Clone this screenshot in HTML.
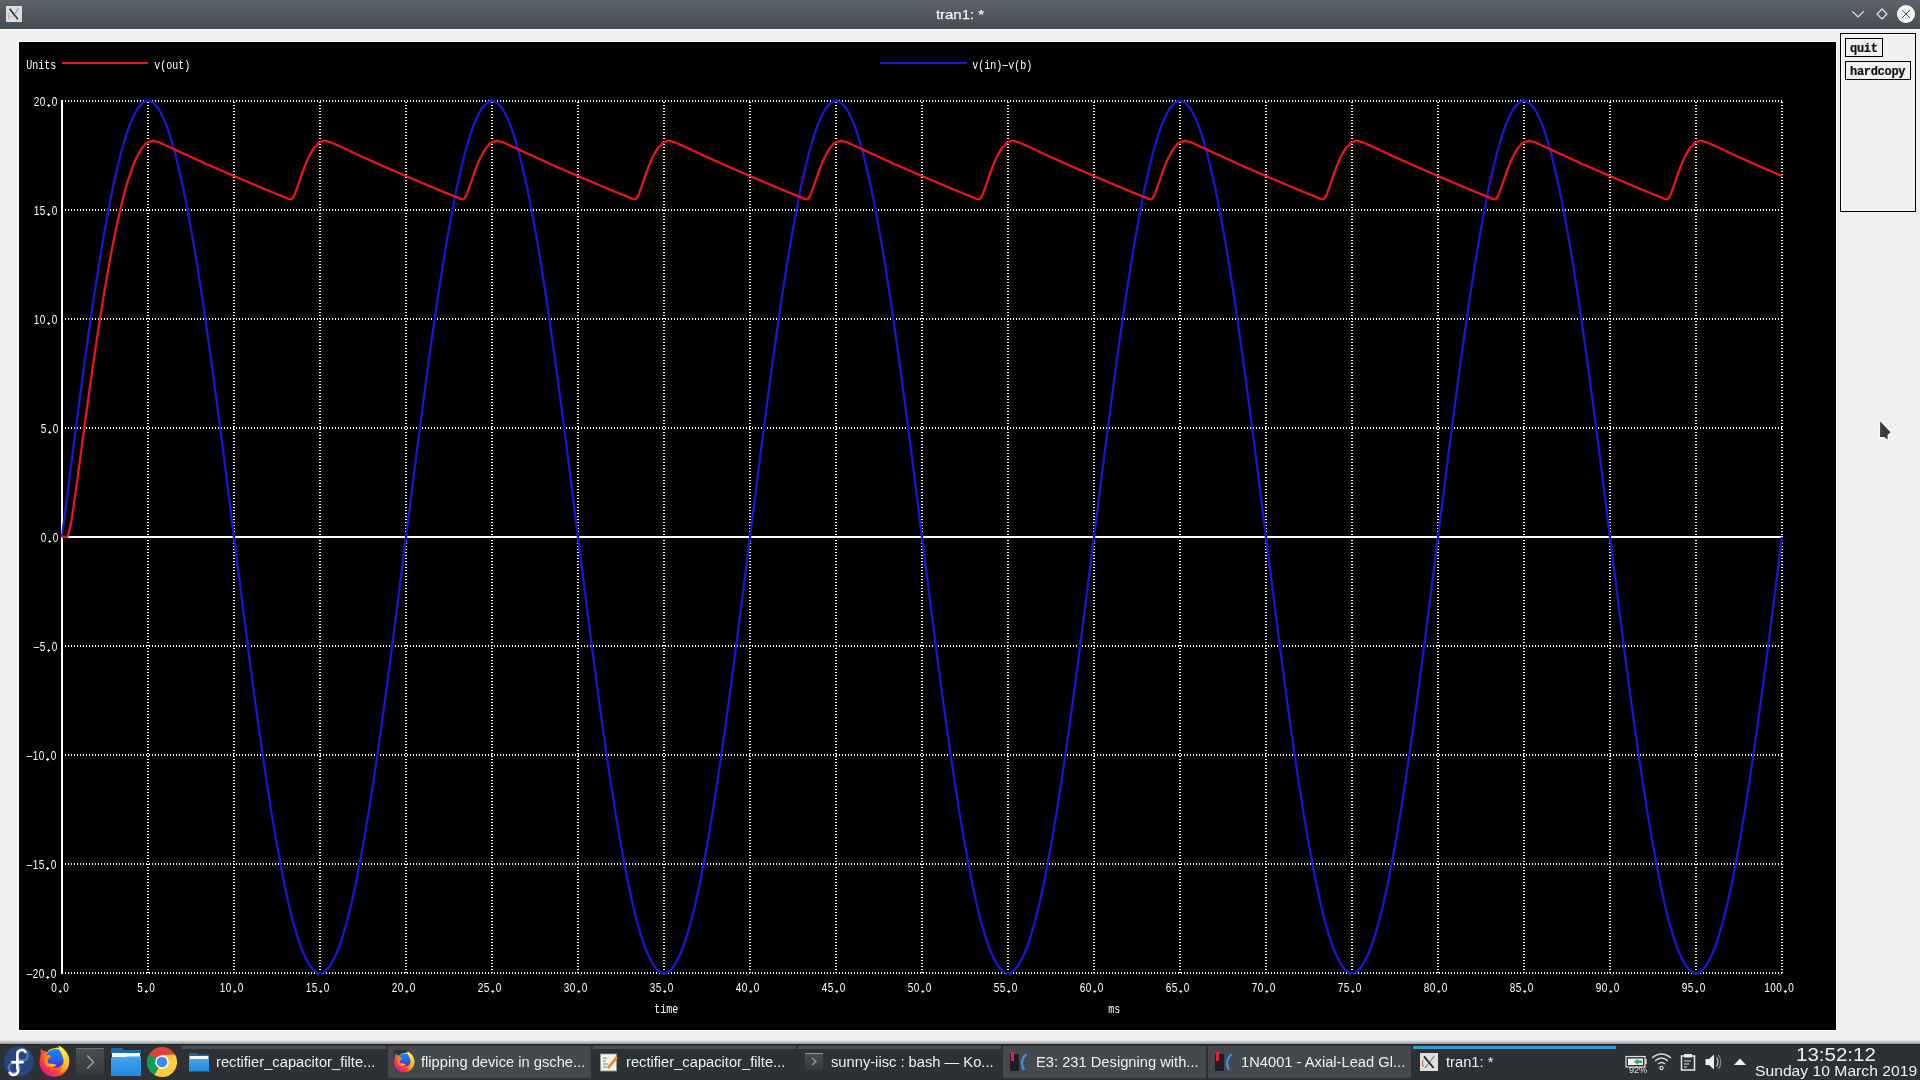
<!DOCTYPE html>
<html><head><meta charset="utf-8"><title>tran1</title>
<style>
html,body{margin:0;padding:0;width:1920px;height:1080px;overflow:hidden;background:#eff0f1;position:relative;font-family:"Liberation Sans",sans-serif}
.abs{position:absolute;transform:translateZ(0)}
#titlebar{left:0;top:0;width:1920px;height:29px;background:linear-gradient(#5c636b,#474c53)}
#title{left:0;top:6.6px;width:1920px;text-align:center;color:#eff0f1;font-size:13px;line-height:16px;transform:translateZ(0) scaleX(1.15);-webkit-text-stroke:0.25px #eff0f1}
#plot{left:18px;top:41px;width:1817px;height:988px;background:#000;border:1px solid #fff}
#chart{position:absolute;left:0;top:0;transform:translateZ(0)}
#panel{left:1840px;top:33px;width:74px;height:177px;border:1px solid #000;box-shadow:inset 1px 1px 0 #fff}
.btn{border:1px solid #000;font-family:"Liberation Mono",monospace;font-weight:bold;font-size:12px;color:#111;line-height:21px;box-sizing:border-box;-webkit-text-stroke:0.2px #111;letter-spacing:-0.3px;overflow:hidden}
#taskbar{left:0;top:1043px;width:1920px;height:37px;background:#2f3337}
.task{top:1046px;height:32px;color:#eff0f1;font-size:14px;line-height:32px;white-space:nowrap;transform-origin:0 0;transform:translateZ(0) scaleX(1.05)}
</style></head><body>
<div id="titlebar" class="abs"></div>
<div id="title" class="abs">tran1: *</div>
<div class="abs" style="left:0;top:29px;width:1920px;height:1px;background:#fcfcfc"></div>
<div id="plot" class="abs"></div>
<svg id="chart" width="1920" height="1080" viewBox="0 0 1920 1080">
<g stroke="#fff" stroke-width="2" stroke-dasharray="1 2" shape-rendering="crispEdges"><line x1="62" y1="101" x2="1783" y2="101"/><line x1="62" y1="210" x2="1783" y2="210"/><line x1="62" y1="319" x2="1783" y2="319"/><line x1="62" y1="428" x2="1783" y2="428"/><line x1="62" y1="646" x2="1783" y2="646"/><line x1="62" y1="755" x2="1783" y2="755"/><line x1="62" y1="864" x2="1783" y2="864"/><line x1="62" y1="973" x2="1783" y2="973"/><line x1="148" y1="102" x2="148" y2="974"/><line x1="234" y1="102" x2="234" y2="974"/><line x1="320" y1="102" x2="320" y2="974"/><line x1="406" y1="102" x2="406" y2="974"/><line x1="492" y1="102" x2="492" y2="974"/><line x1="578" y1="102" x2="578" y2="974"/><line x1="664" y1="102" x2="664" y2="974"/><line x1="750" y1="102" x2="750" y2="974"/><line x1="836" y1="102" x2="836" y2="974"/><line x1="922" y1="102" x2="922" y2="974"/><line x1="1008" y1="102" x2="1008" y2="974"/><line x1="1094" y1="102" x2="1094" y2="974"/><line x1="1180" y1="102" x2="1180" y2="974"/><line x1="1266" y1="102" x2="1266" y2="974"/><line x1="1352" y1="102" x2="1352" y2="974"/><line x1="1438" y1="102" x2="1438" y2="974"/><line x1="1524" y1="102" x2="1524" y2="974"/><line x1="1610" y1="102" x2="1610" y2="974"/><line x1="1696" y1="102" x2="1696" y2="974"/><line x1="1782" y1="102" x2="1782" y2="974"/></g>
<g stroke="#fff" stroke-width="2" shape-rendering="crispEdges"><line x1="62" y1="100" x2="62" y2="974"/><line x1="62" y1="537" x2="1783" y2="537"/></g>
<polyline fill="none" stroke="#1a16d2" stroke-width="2.3" stroke-linejoin="round" points="62.0,537.0 62.9,530.2 63.7,523.3 64.6,516.5 65.4,509.6 66.3,502.8 67.2,496.0 68.0,489.2 68.9,482.4 69.7,475.6 70.6,468.8 71.5,462.0 72.3,455.3 73.2,448.6 74.0,441.9 74.9,435.2 75.8,428.6 76.6,422.0 77.5,415.4 78.3,408.8 79.2,402.3 80.1,395.8 80.9,389.3 81.8,382.9 82.6,376.5 83.5,370.2 84.4,363.8 85.2,357.6 86.1,351.4 86.9,345.2 87.8,339.1 88.7,333.0 89.5,327.0 90.4,321.0 91.2,315.1 92.1,309.2 93.0,303.4 93.8,297.6 94.7,291.9 95.5,286.3 96.4,280.7 97.3,275.2 98.1,269.8 99.0,264.4 99.8,259.1 100.7,253.8 101.6,248.7 102.4,243.6 103.3,238.5 104.1,233.6 105.0,228.7 105.9,223.9 106.7,219.2 107.6,214.5 108.4,210.0 109.3,205.5 110.2,201.1 111.0,196.7 111.9,192.5 112.7,188.3 113.6,184.3 114.5,180.3 115.3,176.4 116.2,172.6 117.0,168.9 117.9,165.2 118.8,161.7 119.6,158.3 120.5,154.9 121.3,151.7 122.2,148.5 123.1,145.5 123.9,142.5 124.8,139.6 125.6,136.9 126.5,134.2 127.4,131.6 128.2,129.1 129.1,126.8 129.9,124.5 130.8,122.3 131.7,120.3 132.5,118.3 133.4,116.5 134.2,114.7 135.1,113.0 136.0,111.5 136.8,110.1 137.7,108.7 138.5,107.5 139.4,106.4 140.3,105.3 141.1,104.4 142.0,103.6 142.8,102.9 143.7,102.3 144.6,101.9 145.4,101.5 146.3,101.2 147.1,101.1 148.0,101.0 148.9,101.1 149.7,101.2 150.6,101.5 151.4,101.9 152.3,102.3 153.2,102.9 154.0,103.6 154.9,104.4 155.7,105.3 156.6,106.4 157.5,107.5 158.3,108.7 159.2,110.1 160.0,111.5 160.9,113.0 161.8,114.7 162.6,116.5 163.5,118.3 164.3,120.3 165.2,122.3 166.1,124.5 166.9,126.8 167.8,129.1 168.6,131.6 169.5,134.2 170.4,136.9 171.2,139.6 172.1,142.5 172.9,145.5 173.8,148.5 174.7,151.7 175.5,154.9 176.4,158.3 177.2,161.7 178.1,165.2 179.0,168.9 179.8,172.6 180.7,176.4 181.5,180.3 182.4,184.3 183.3,188.3 184.1,192.5 185.0,196.7 185.8,201.1 186.7,205.5 187.6,210.0 188.4,214.5 189.3,219.2 190.1,223.9 191.0,228.7 191.9,233.6 192.7,238.5 193.6,243.6 194.4,248.7 195.3,253.8 196.2,259.1 197.0,264.4 197.9,269.8 198.7,275.2 199.6,280.7 200.5,286.3 201.3,291.9 202.2,297.6 203.0,303.4 203.9,309.2 204.8,315.1 205.6,321.0 206.5,327.0 207.3,333.0 208.2,339.1 209.1,345.2 209.9,351.4 210.8,357.6 211.6,363.8 212.5,370.2 213.4,376.5 214.2,382.9 215.1,389.3 215.9,395.8 216.8,402.3 217.7,408.8 218.5,415.4 219.4,422.0 220.2,428.6 221.1,435.2 222.0,441.9 222.8,448.6 223.7,455.3 224.5,462.0 225.4,468.8 226.3,475.6 227.1,482.4 228.0,489.2 228.8,496.0 229.7,502.8 230.6,509.6 231.4,516.5 232.3,523.3 233.1,530.2 234.0,537.0 234.9,543.8 235.7,550.7 236.6,557.5 237.4,564.4 238.3,571.2 239.2,578.0 240.0,584.8 240.9,591.6 241.7,598.4 242.6,605.2 243.5,612.0 244.3,618.7 245.2,625.4 246.0,632.1 246.9,638.8 247.8,645.4 248.6,652.0 249.5,658.6 250.3,665.2 251.2,671.7 252.1,678.2 252.9,684.7 253.8,691.1 254.6,697.5 255.5,703.8 256.4,710.2 257.2,716.4 258.1,722.6 258.9,728.8 259.8,734.9 260.7,741.0 261.5,747.0 262.4,753.0 263.2,758.9 264.1,764.8 265.0,770.6 265.8,776.4 266.7,782.1 267.5,787.7 268.4,793.3 269.3,798.8 270.1,804.2 271.0,809.6 271.8,814.9 272.7,820.2 273.6,825.3 274.4,830.4 275.3,835.5 276.1,840.4 277.0,845.3 277.9,850.1 278.7,854.8 279.6,859.5 280.4,864.0 281.3,868.5 282.2,872.9 283.0,877.3 283.9,881.5 284.7,885.7 285.6,889.7 286.5,893.7 287.3,897.6 288.2,901.4 289.0,905.1 289.9,908.8 290.8,912.3 291.6,915.7 292.5,919.1 293.3,922.3 294.2,925.5 295.1,928.5 295.9,931.5 296.8,934.4 297.6,937.1 298.5,939.8 299.4,942.4 300.2,944.9 301.1,947.2 301.9,949.5 302.8,951.7 303.7,953.7 304.5,955.7 305.4,957.5 306.2,959.3 307.1,961.0 308.0,962.5 308.8,963.9 309.7,965.3 310.5,966.5 311.4,967.6 312.3,968.7 313.1,969.6 314.0,970.4 314.8,971.1 315.7,971.7 316.6,972.1 317.4,972.5 318.3,972.8 319.1,972.9 320.0,973.0 320.9,972.9 321.7,972.8 322.6,972.5 323.4,972.1 324.3,971.7 325.2,971.1 326.0,970.4 326.9,969.6 327.7,968.7 328.6,967.6 329.5,966.5 330.3,965.3 331.2,963.9 332.0,962.5 332.9,961.0 333.8,959.3 334.6,957.5 335.5,955.7 336.3,953.7 337.2,951.7 338.1,949.5 338.9,947.2 339.8,944.9 340.6,942.4 341.5,939.8 342.4,937.1 343.2,934.4 344.1,931.5 344.9,928.5 345.8,925.5 346.7,922.3 347.5,919.1 348.4,915.7 349.2,912.3 350.1,908.8 351.0,905.1 351.8,901.4 352.7,897.6 353.5,893.7 354.4,889.7 355.3,885.7 356.1,881.5 357.0,877.3 357.8,872.9 358.7,868.5 359.6,864.0 360.4,859.5 361.3,854.8 362.1,850.1 363.0,845.3 363.9,840.4 364.7,835.5 365.6,830.4 366.4,825.3 367.3,820.2 368.2,814.9 369.0,809.6 369.9,804.2 370.7,798.8 371.6,793.3 372.5,787.7 373.3,782.1 374.2,776.4 375.0,770.6 375.9,764.8 376.8,758.9 377.6,753.0 378.5,747.0 379.3,741.0 380.2,734.9 381.1,728.8 381.9,722.6 382.8,716.4 383.6,710.2 384.5,703.8 385.4,697.5 386.2,691.1 387.1,684.7 387.9,678.2 388.8,671.7 389.7,665.2 390.5,658.6 391.4,652.0 392.2,645.4 393.1,638.8 394.0,632.1 394.8,625.4 395.7,618.7 396.5,612.0 397.4,605.2 398.3,598.4 399.1,591.6 400.0,584.8 400.8,578.0 401.7,571.2 402.6,564.4 403.4,557.5 404.3,550.7 405.1,543.8 406.0,537.0 406.9,530.2 407.7,523.3 408.6,516.5 409.4,509.6 410.3,502.8 411.2,496.0 412.0,489.2 412.9,482.4 413.7,475.6 414.6,468.8 415.5,462.0 416.3,455.3 417.2,448.6 418.0,441.9 418.9,435.2 419.8,428.6 420.6,422.0 421.5,415.4 422.3,408.8 423.2,402.3 424.1,395.8 424.9,389.3 425.8,382.9 426.6,376.5 427.5,370.2 428.4,363.8 429.2,357.6 430.1,351.4 430.9,345.2 431.8,339.1 432.7,333.0 433.5,327.0 434.4,321.0 435.2,315.1 436.1,309.2 437.0,303.4 437.8,297.6 438.7,291.9 439.5,286.3 440.4,280.7 441.3,275.2 442.1,269.8 443.0,264.4 443.8,259.1 444.7,253.8 445.6,248.7 446.4,243.6 447.3,238.5 448.1,233.6 449.0,228.7 449.9,223.9 450.7,219.2 451.6,214.5 452.4,210.0 453.3,205.5 454.2,201.1 455.0,196.7 455.9,192.5 456.7,188.3 457.6,184.3 458.5,180.3 459.3,176.4 460.2,172.6 461.0,168.9 461.9,165.2 462.8,161.7 463.6,158.3 464.5,154.9 465.3,151.7 466.2,148.5 467.1,145.5 467.9,142.5 468.8,139.6 469.6,136.9 470.5,134.2 471.4,131.6 472.2,129.1 473.1,126.8 473.9,124.5 474.8,122.3 475.7,120.3 476.5,118.3 477.4,116.5 478.2,114.7 479.1,113.0 480.0,111.5 480.8,110.1 481.7,108.7 482.5,107.5 483.4,106.4 484.3,105.3 485.1,104.4 486.0,103.6 486.8,102.9 487.7,102.3 488.6,101.9 489.4,101.5 490.3,101.2 491.1,101.1 492.0,101.0 492.9,101.1 493.7,101.2 494.6,101.5 495.4,101.9 496.3,102.3 497.2,102.9 498.0,103.6 498.9,104.4 499.7,105.3 500.6,106.4 501.5,107.5 502.3,108.7 503.2,110.1 504.0,111.5 504.9,113.0 505.8,114.7 506.6,116.5 507.5,118.3 508.3,120.3 509.2,122.3 510.1,124.5 510.9,126.8 511.8,129.1 512.6,131.6 513.5,134.2 514.4,136.9 515.2,139.6 516.1,142.5 516.9,145.5 517.8,148.5 518.7,151.7 519.5,154.9 520.4,158.3 521.2,161.7 522.1,165.2 523.0,168.9 523.8,172.6 524.7,176.4 525.5,180.3 526.4,184.3 527.3,188.3 528.1,192.5 529.0,196.7 529.8,201.1 530.7,205.5 531.6,210.0 532.4,214.5 533.3,219.2 534.1,223.9 535.0,228.7 535.9,233.6 536.7,238.5 537.6,243.6 538.4,248.7 539.3,253.8 540.2,259.1 541.0,264.4 541.9,269.8 542.7,275.2 543.6,280.7 544.5,286.3 545.3,291.9 546.2,297.6 547.0,303.4 547.9,309.2 548.8,315.1 549.6,321.0 550.5,327.0 551.3,333.0 552.2,339.1 553.1,345.2 553.9,351.4 554.8,357.6 555.6,363.8 556.5,370.2 557.4,376.5 558.2,382.9 559.1,389.3 559.9,395.8 560.8,402.3 561.7,408.8 562.5,415.4 563.4,422.0 564.2,428.6 565.1,435.2 566.0,441.9 566.8,448.6 567.7,455.3 568.5,462.0 569.4,468.8 570.3,475.6 571.1,482.4 572.0,489.2 572.8,496.0 573.7,502.8 574.6,509.6 575.4,516.5 576.3,523.3 577.1,530.2 578.0,537.0 578.9,543.8 579.7,550.7 580.6,557.5 581.4,564.4 582.3,571.2 583.2,578.0 584.0,584.8 584.9,591.6 585.7,598.4 586.6,605.2 587.5,612.0 588.3,618.7 589.2,625.4 590.0,632.1 590.9,638.8 591.8,645.4 592.6,652.0 593.5,658.6 594.3,665.2 595.2,671.7 596.1,678.2 596.9,684.7 597.8,691.1 598.6,697.5 599.5,703.8 600.4,710.2 601.2,716.4 602.1,722.6 602.9,728.8 603.8,734.9 604.7,741.0 605.5,747.0 606.4,753.0 607.2,758.9 608.1,764.8 609.0,770.6 609.8,776.4 610.7,782.1 611.5,787.7 612.4,793.3 613.3,798.8 614.1,804.2 615.0,809.6 615.8,814.9 616.7,820.2 617.6,825.3 618.4,830.4 619.3,835.5 620.1,840.4 621.0,845.3 621.9,850.1 622.7,854.8 623.6,859.5 624.4,864.0 625.3,868.5 626.2,872.9 627.0,877.3 627.9,881.5 628.7,885.7 629.6,889.7 630.5,893.7 631.3,897.6 632.2,901.4 633.0,905.1 633.9,908.8 634.8,912.3 635.6,915.7 636.5,919.1 637.3,922.3 638.2,925.5 639.1,928.5 639.9,931.5 640.8,934.4 641.6,937.1 642.5,939.8 643.4,942.4 644.2,944.9 645.1,947.2 645.9,949.5 646.8,951.7 647.7,953.7 648.5,955.7 649.4,957.5 650.2,959.3 651.1,961.0 652.0,962.5 652.8,963.9 653.7,965.3 654.5,966.5 655.4,967.6 656.3,968.7 657.1,969.6 658.0,970.4 658.8,971.1 659.7,971.7 660.6,972.1 661.4,972.5 662.3,972.8 663.1,972.9 664.0,973.0 664.9,972.9 665.7,972.8 666.6,972.5 667.4,972.1 668.3,971.7 669.2,971.1 670.0,970.4 670.9,969.6 671.7,968.7 672.6,967.6 673.5,966.5 674.3,965.3 675.2,963.9 676.0,962.5 676.9,961.0 677.8,959.3 678.6,957.5 679.5,955.7 680.3,953.7 681.2,951.7 682.1,949.5 682.9,947.2 683.8,944.9 684.6,942.4 685.5,939.8 686.4,937.1 687.2,934.4 688.1,931.5 688.9,928.5 689.8,925.5 690.7,922.3 691.5,919.1 692.4,915.7 693.2,912.3 694.1,908.8 695.0,905.1 695.8,901.4 696.7,897.6 697.5,893.7 698.4,889.7 699.3,885.7 700.1,881.5 701.0,877.3 701.8,872.9 702.7,868.5 703.6,864.0 704.4,859.5 705.3,854.8 706.1,850.1 707.0,845.3 707.9,840.4 708.7,835.5 709.6,830.4 710.4,825.3 711.3,820.2 712.2,814.9 713.0,809.6 713.9,804.2 714.7,798.8 715.6,793.3 716.5,787.7 717.3,782.1 718.2,776.4 719.0,770.6 719.9,764.8 720.8,758.9 721.6,753.0 722.5,747.0 723.3,741.0 724.2,734.9 725.1,728.8 725.9,722.6 726.8,716.4 727.6,710.2 728.5,703.8 729.4,697.5 730.2,691.1 731.1,684.7 731.9,678.2 732.8,671.7 733.7,665.2 734.5,658.6 735.4,652.0 736.2,645.4 737.1,638.8 738.0,632.1 738.8,625.4 739.7,618.7 740.5,612.0 741.4,605.2 742.3,598.4 743.1,591.6 744.0,584.8 744.8,578.0 745.7,571.2 746.6,564.4 747.4,557.5 748.3,550.7 749.1,543.8 750.0,537.0 750.9,530.2 751.7,523.3 752.6,516.5 753.4,509.6 754.3,502.8 755.2,496.0 756.0,489.2 756.9,482.4 757.7,475.6 758.6,468.8 759.5,462.0 760.3,455.3 761.2,448.6 762.0,441.9 762.9,435.2 763.8,428.6 764.6,422.0 765.5,415.4 766.3,408.8 767.2,402.3 768.1,395.8 768.9,389.3 769.8,382.9 770.6,376.5 771.5,370.2 772.4,363.8 773.2,357.6 774.1,351.4 774.9,345.2 775.8,339.1 776.7,333.0 777.5,327.0 778.4,321.0 779.2,315.1 780.1,309.2 781.0,303.4 781.8,297.6 782.7,291.9 783.5,286.3 784.4,280.7 785.3,275.2 786.1,269.8 787.0,264.4 787.8,259.1 788.7,253.8 789.6,248.7 790.4,243.6 791.3,238.5 792.1,233.6 793.0,228.7 793.9,223.9 794.7,219.2 795.6,214.5 796.4,210.0 797.3,205.5 798.2,201.1 799.0,196.7 799.9,192.5 800.7,188.3 801.6,184.3 802.5,180.3 803.3,176.4 804.2,172.6 805.0,168.9 805.9,165.2 806.8,161.7 807.6,158.3 808.5,154.9 809.3,151.7 810.2,148.5 811.1,145.5 811.9,142.5 812.8,139.6 813.6,136.9 814.5,134.2 815.4,131.6 816.2,129.1 817.1,126.8 817.9,124.5 818.8,122.3 819.7,120.3 820.5,118.3 821.4,116.5 822.2,114.7 823.1,113.0 824.0,111.5 824.8,110.1 825.7,108.7 826.5,107.5 827.4,106.4 828.3,105.3 829.1,104.4 830.0,103.6 830.8,102.9 831.7,102.3 832.6,101.9 833.4,101.5 834.3,101.2 835.1,101.1 836.0,101.0 836.9,101.1 837.7,101.2 838.6,101.5 839.4,101.9 840.3,102.3 841.2,102.9 842.0,103.6 842.9,104.4 843.7,105.3 844.6,106.4 845.5,107.5 846.3,108.7 847.2,110.1 848.0,111.5 848.9,113.0 849.8,114.7 850.6,116.5 851.5,118.3 852.3,120.3 853.2,122.3 854.1,124.5 854.9,126.8 855.8,129.1 856.6,131.6 857.5,134.2 858.4,136.9 859.2,139.6 860.1,142.5 860.9,145.5 861.8,148.5 862.7,151.7 863.5,154.9 864.4,158.3 865.2,161.7 866.1,165.2 867.0,168.9 867.8,172.6 868.7,176.4 869.5,180.3 870.4,184.3 871.3,188.3 872.1,192.5 873.0,196.7 873.8,201.1 874.7,205.5 875.6,210.0 876.4,214.5 877.3,219.2 878.1,223.9 879.0,228.7 879.9,233.6 880.7,238.5 881.6,243.6 882.4,248.7 883.3,253.8 884.2,259.1 885.0,264.4 885.9,269.8 886.7,275.2 887.6,280.7 888.5,286.3 889.3,291.9 890.2,297.6 891.0,303.4 891.9,309.2 892.8,315.1 893.6,321.0 894.5,327.0 895.3,333.0 896.2,339.1 897.1,345.2 897.9,351.4 898.8,357.6 899.6,363.8 900.5,370.2 901.4,376.5 902.2,382.9 903.1,389.3 903.9,395.8 904.8,402.3 905.7,408.8 906.5,415.4 907.4,422.0 908.2,428.6 909.1,435.2 910.0,441.9 910.8,448.6 911.7,455.3 912.5,462.0 913.4,468.8 914.3,475.6 915.1,482.4 916.0,489.2 916.8,496.0 917.7,502.8 918.6,509.6 919.4,516.5 920.3,523.3 921.1,530.2 922.0,537.0 922.9,543.8 923.7,550.7 924.6,557.5 925.4,564.4 926.3,571.2 927.2,578.0 928.0,584.8 928.9,591.6 929.7,598.4 930.6,605.2 931.5,612.0 932.3,618.7 933.2,625.4 934.0,632.1 934.9,638.8 935.8,645.4 936.6,652.0 937.5,658.6 938.3,665.2 939.2,671.7 940.1,678.2 940.9,684.7 941.8,691.1 942.6,697.5 943.5,703.8 944.4,710.2 945.2,716.4 946.1,722.6 946.9,728.8 947.8,734.9 948.7,741.0 949.5,747.0 950.4,753.0 951.2,758.9 952.1,764.8 953.0,770.6 953.8,776.4 954.7,782.1 955.5,787.7 956.4,793.3 957.3,798.8 958.1,804.2 959.0,809.6 959.8,814.9 960.7,820.2 961.6,825.3 962.4,830.4 963.3,835.5 964.1,840.4 965.0,845.3 965.9,850.1 966.7,854.8 967.6,859.5 968.4,864.0 969.3,868.5 970.2,872.9 971.0,877.3 971.9,881.5 972.7,885.7 973.6,889.7 974.5,893.7 975.3,897.6 976.2,901.4 977.0,905.1 977.9,908.8 978.8,912.3 979.6,915.7 980.5,919.1 981.3,922.3 982.2,925.5 983.1,928.5 983.9,931.5 984.8,934.4 985.6,937.1 986.5,939.8 987.4,942.4 988.2,944.9 989.1,947.2 989.9,949.5 990.8,951.7 991.7,953.7 992.5,955.7 993.4,957.5 994.2,959.3 995.1,961.0 996.0,962.5 996.8,963.9 997.7,965.3 998.5,966.5 999.4,967.6 1000.3,968.7 1001.1,969.6 1002.0,970.4 1002.8,971.1 1003.7,971.7 1004.6,972.1 1005.4,972.5 1006.3,972.8 1007.1,972.9 1008.0,973.0 1008.9,972.9 1009.7,972.8 1010.6,972.5 1011.4,972.1 1012.3,971.7 1013.2,971.1 1014.0,970.4 1014.9,969.6 1015.7,968.7 1016.6,967.6 1017.5,966.5 1018.3,965.3 1019.2,963.9 1020.0,962.5 1020.9,961.0 1021.8,959.3 1022.6,957.5 1023.5,955.7 1024.3,953.7 1025.2,951.7 1026.1,949.5 1026.9,947.2 1027.8,944.9 1028.6,942.4 1029.5,939.8 1030.4,937.1 1031.2,934.4 1032.1,931.5 1032.9,928.5 1033.8,925.5 1034.7,922.3 1035.5,919.1 1036.4,915.7 1037.2,912.3 1038.1,908.8 1039.0,905.1 1039.8,901.4 1040.7,897.6 1041.5,893.7 1042.4,889.7 1043.3,885.7 1044.1,881.5 1045.0,877.3 1045.8,872.9 1046.7,868.5 1047.6,864.0 1048.4,859.5 1049.3,854.8 1050.1,850.1 1051.0,845.3 1051.9,840.4 1052.7,835.5 1053.6,830.4 1054.4,825.3 1055.3,820.2 1056.2,814.9 1057.0,809.6 1057.9,804.2 1058.7,798.8 1059.6,793.3 1060.5,787.7 1061.3,782.1 1062.2,776.4 1063.0,770.6 1063.9,764.8 1064.8,758.9 1065.6,753.0 1066.5,747.0 1067.3,741.0 1068.2,734.9 1069.1,728.8 1069.9,722.6 1070.8,716.4 1071.6,710.2 1072.5,703.8 1073.4,697.5 1074.2,691.1 1075.1,684.7 1075.9,678.2 1076.8,671.7 1077.7,665.2 1078.5,658.6 1079.4,652.0 1080.2,645.4 1081.1,638.8 1082.0,632.1 1082.8,625.4 1083.7,618.7 1084.5,612.0 1085.4,605.2 1086.3,598.4 1087.1,591.6 1088.0,584.8 1088.8,578.0 1089.7,571.2 1090.6,564.4 1091.4,557.5 1092.3,550.7 1093.1,543.8 1094.0,537.0 1094.9,530.2 1095.7,523.3 1096.6,516.5 1097.4,509.6 1098.3,502.8 1099.2,496.0 1100.0,489.2 1100.9,482.4 1101.7,475.6 1102.6,468.8 1103.5,462.0 1104.3,455.3 1105.2,448.6 1106.0,441.9 1106.9,435.2 1107.8,428.6 1108.6,422.0 1109.5,415.4 1110.3,408.8 1111.2,402.3 1112.1,395.8 1112.9,389.3 1113.8,382.9 1114.6,376.5 1115.5,370.2 1116.4,363.8 1117.2,357.6 1118.1,351.4 1118.9,345.2 1119.8,339.1 1120.7,333.0 1121.5,327.0 1122.4,321.0 1123.2,315.1 1124.1,309.2 1125.0,303.4 1125.8,297.6 1126.7,291.9 1127.5,286.3 1128.4,280.7 1129.3,275.2 1130.1,269.8 1131.0,264.4 1131.8,259.1 1132.7,253.8 1133.6,248.7 1134.4,243.6 1135.3,238.5 1136.1,233.6 1137.0,228.7 1137.9,223.9 1138.7,219.2 1139.6,214.5 1140.4,210.0 1141.3,205.5 1142.2,201.1 1143.0,196.7 1143.9,192.5 1144.7,188.3 1145.6,184.3 1146.5,180.3 1147.3,176.4 1148.2,172.6 1149.0,168.9 1149.9,165.2 1150.8,161.7 1151.6,158.3 1152.5,154.9 1153.3,151.7 1154.2,148.5 1155.1,145.5 1155.9,142.5 1156.8,139.6 1157.6,136.9 1158.5,134.2 1159.4,131.6 1160.2,129.1 1161.1,126.8 1161.9,124.5 1162.8,122.3 1163.7,120.3 1164.5,118.3 1165.4,116.5 1166.2,114.7 1167.1,113.0 1168.0,111.5 1168.8,110.1 1169.7,108.7 1170.5,107.5 1171.4,106.4 1172.3,105.3 1173.1,104.4 1174.0,103.6 1174.8,102.9 1175.7,102.3 1176.6,101.9 1177.4,101.5 1178.3,101.2 1179.1,101.1 1180.0,101.0 1180.9,101.1 1181.7,101.2 1182.6,101.5 1183.4,101.9 1184.3,102.3 1185.2,102.9 1186.0,103.6 1186.9,104.4 1187.7,105.3 1188.6,106.4 1189.5,107.5 1190.3,108.7 1191.2,110.1 1192.0,111.5 1192.9,113.0 1193.8,114.7 1194.6,116.5 1195.5,118.3 1196.3,120.3 1197.2,122.3 1198.1,124.5 1198.9,126.8 1199.8,129.1 1200.6,131.6 1201.5,134.2 1202.4,136.9 1203.2,139.6 1204.1,142.5 1204.9,145.5 1205.8,148.5 1206.7,151.7 1207.5,154.9 1208.4,158.3 1209.2,161.7 1210.1,165.2 1211.0,168.9 1211.8,172.6 1212.7,176.4 1213.5,180.3 1214.4,184.3 1215.3,188.3 1216.1,192.5 1217.0,196.7 1217.8,201.1 1218.7,205.5 1219.6,210.0 1220.4,214.5 1221.3,219.2 1222.1,223.9 1223.0,228.7 1223.9,233.6 1224.7,238.5 1225.6,243.6 1226.4,248.7 1227.3,253.8 1228.2,259.1 1229.0,264.4 1229.9,269.8 1230.7,275.2 1231.6,280.7 1232.5,286.3 1233.3,291.9 1234.2,297.6 1235.0,303.4 1235.9,309.2 1236.8,315.1 1237.6,321.0 1238.5,327.0 1239.3,333.0 1240.2,339.1 1241.1,345.2 1241.9,351.4 1242.8,357.6 1243.6,363.8 1244.5,370.2 1245.4,376.5 1246.2,382.9 1247.1,389.3 1247.9,395.8 1248.8,402.3 1249.7,408.8 1250.5,415.4 1251.4,422.0 1252.2,428.6 1253.1,435.2 1254.0,441.9 1254.8,448.6 1255.7,455.3 1256.5,462.0 1257.4,468.8 1258.3,475.6 1259.1,482.4 1260.0,489.2 1260.8,496.0 1261.7,502.8 1262.6,509.6 1263.4,516.5 1264.3,523.3 1265.1,530.2 1266.0,537.0 1266.9,543.8 1267.7,550.7 1268.6,557.5 1269.4,564.4 1270.3,571.2 1271.2,578.0 1272.0,584.8 1272.9,591.6 1273.7,598.4 1274.6,605.2 1275.5,612.0 1276.3,618.7 1277.2,625.4 1278.0,632.1 1278.9,638.8 1279.8,645.4 1280.6,652.0 1281.5,658.6 1282.3,665.2 1283.2,671.7 1284.1,678.2 1284.9,684.7 1285.8,691.1 1286.6,697.5 1287.5,703.8 1288.4,710.2 1289.2,716.4 1290.1,722.6 1290.9,728.8 1291.8,734.9 1292.7,741.0 1293.5,747.0 1294.4,753.0 1295.2,758.9 1296.1,764.8 1297.0,770.6 1297.8,776.4 1298.7,782.1 1299.5,787.7 1300.4,793.3 1301.3,798.8 1302.1,804.2 1303.0,809.6 1303.8,814.9 1304.7,820.2 1305.6,825.3 1306.4,830.4 1307.3,835.5 1308.1,840.4 1309.0,845.3 1309.9,850.1 1310.7,854.8 1311.6,859.5 1312.4,864.0 1313.3,868.5 1314.2,872.9 1315.0,877.3 1315.9,881.5 1316.7,885.7 1317.6,889.7 1318.5,893.7 1319.3,897.6 1320.2,901.4 1321.0,905.1 1321.9,908.8 1322.8,912.3 1323.6,915.7 1324.5,919.1 1325.3,922.3 1326.2,925.5 1327.1,928.5 1327.9,931.5 1328.8,934.4 1329.6,937.1 1330.5,939.8 1331.4,942.4 1332.2,944.9 1333.1,947.2 1333.9,949.5 1334.8,951.7 1335.7,953.7 1336.5,955.7 1337.4,957.5 1338.2,959.3 1339.1,961.0 1340.0,962.5 1340.8,963.9 1341.7,965.3 1342.5,966.5 1343.4,967.6 1344.3,968.7 1345.1,969.6 1346.0,970.4 1346.8,971.1 1347.7,971.7 1348.6,972.1 1349.4,972.5 1350.3,972.8 1351.1,972.9 1352.0,973.0 1352.9,972.9 1353.7,972.8 1354.6,972.5 1355.4,972.1 1356.3,971.7 1357.2,971.1 1358.0,970.4 1358.9,969.6 1359.7,968.7 1360.6,967.6 1361.5,966.5 1362.3,965.3 1363.2,963.9 1364.0,962.5 1364.9,961.0 1365.8,959.3 1366.6,957.5 1367.5,955.7 1368.3,953.7 1369.2,951.7 1370.1,949.5 1370.9,947.2 1371.8,944.9 1372.6,942.4 1373.5,939.8 1374.4,937.1 1375.2,934.4 1376.1,931.5 1376.9,928.5 1377.8,925.5 1378.7,922.3 1379.5,919.1 1380.4,915.7 1381.2,912.3 1382.1,908.8 1383.0,905.1 1383.8,901.4 1384.7,897.6 1385.5,893.7 1386.4,889.7 1387.3,885.7 1388.1,881.5 1389.0,877.3 1389.8,872.9 1390.7,868.5 1391.6,864.0 1392.4,859.5 1393.3,854.8 1394.1,850.1 1395.0,845.3 1395.9,840.4 1396.7,835.5 1397.6,830.4 1398.4,825.3 1399.3,820.2 1400.2,814.9 1401.0,809.6 1401.9,804.2 1402.7,798.8 1403.6,793.3 1404.5,787.7 1405.3,782.1 1406.2,776.4 1407.0,770.6 1407.9,764.8 1408.8,758.9 1409.6,753.0 1410.5,747.0 1411.3,741.0 1412.2,734.9 1413.1,728.8 1413.9,722.6 1414.8,716.4 1415.6,710.2 1416.5,703.8 1417.4,697.5 1418.2,691.1 1419.1,684.7 1419.9,678.2 1420.8,671.7 1421.7,665.2 1422.5,658.6 1423.4,652.0 1424.2,645.4 1425.1,638.8 1426.0,632.1 1426.8,625.4 1427.7,618.7 1428.5,612.0 1429.4,605.2 1430.3,598.4 1431.1,591.6 1432.0,584.8 1432.8,578.0 1433.7,571.2 1434.6,564.4 1435.4,557.5 1436.3,550.7 1437.1,543.8 1438.0,537.0 1438.9,530.2 1439.7,523.3 1440.6,516.5 1441.4,509.6 1442.3,502.8 1443.2,496.0 1444.0,489.2 1444.9,482.4 1445.7,475.6 1446.6,468.8 1447.5,462.0 1448.3,455.3 1449.2,448.6 1450.0,441.9 1450.9,435.2 1451.8,428.6 1452.6,422.0 1453.5,415.4 1454.3,408.8 1455.2,402.3 1456.1,395.8 1456.9,389.3 1457.8,382.9 1458.6,376.5 1459.5,370.2 1460.4,363.8 1461.2,357.6 1462.1,351.4 1462.9,345.2 1463.8,339.1 1464.7,333.0 1465.5,327.0 1466.4,321.0 1467.2,315.1 1468.1,309.2 1469.0,303.4 1469.8,297.6 1470.7,291.9 1471.5,286.3 1472.4,280.7 1473.3,275.2 1474.1,269.8 1475.0,264.4 1475.8,259.1 1476.7,253.8 1477.6,248.7 1478.4,243.6 1479.3,238.5 1480.1,233.6 1481.0,228.7 1481.9,223.9 1482.7,219.2 1483.6,214.5 1484.4,210.0 1485.3,205.5 1486.2,201.1 1487.0,196.7 1487.9,192.5 1488.7,188.3 1489.6,184.3 1490.5,180.3 1491.3,176.4 1492.2,172.6 1493.0,168.9 1493.9,165.2 1494.8,161.7 1495.6,158.3 1496.5,154.9 1497.3,151.7 1498.2,148.5 1499.1,145.5 1499.9,142.5 1500.8,139.6 1501.6,136.9 1502.5,134.2 1503.4,131.6 1504.2,129.1 1505.1,126.8 1505.9,124.5 1506.8,122.3 1507.7,120.3 1508.5,118.3 1509.4,116.5 1510.2,114.7 1511.1,113.0 1512.0,111.5 1512.8,110.1 1513.7,108.7 1514.5,107.5 1515.4,106.4 1516.3,105.3 1517.1,104.4 1518.0,103.6 1518.8,102.9 1519.7,102.3 1520.6,101.9 1521.4,101.5 1522.3,101.2 1523.1,101.1 1524.0,101.0 1524.9,101.1 1525.7,101.2 1526.6,101.5 1527.4,101.9 1528.3,102.3 1529.2,102.9 1530.0,103.6 1530.9,104.4 1531.7,105.3 1532.6,106.4 1533.5,107.5 1534.3,108.7 1535.2,110.1 1536.0,111.5 1536.9,113.0 1537.8,114.7 1538.6,116.5 1539.5,118.3 1540.3,120.3 1541.2,122.3 1542.1,124.5 1542.9,126.8 1543.8,129.1 1544.6,131.6 1545.5,134.2 1546.4,136.9 1547.2,139.6 1548.1,142.5 1548.9,145.5 1549.8,148.5 1550.7,151.7 1551.5,154.9 1552.4,158.3 1553.2,161.7 1554.1,165.2 1555.0,168.9 1555.8,172.6 1556.7,176.4 1557.5,180.3 1558.4,184.3 1559.3,188.3 1560.1,192.5 1561.0,196.7 1561.8,201.1 1562.7,205.5 1563.6,210.0 1564.4,214.5 1565.3,219.2 1566.1,223.9 1567.0,228.7 1567.9,233.6 1568.7,238.5 1569.6,243.6 1570.4,248.7 1571.3,253.8 1572.2,259.1 1573.0,264.4 1573.9,269.8 1574.7,275.2 1575.6,280.7 1576.5,286.3 1577.3,291.9 1578.2,297.6 1579.0,303.4 1579.9,309.2 1580.8,315.1 1581.6,321.0 1582.5,327.0 1583.3,333.0 1584.2,339.1 1585.1,345.2 1585.9,351.4 1586.8,357.6 1587.6,363.8 1588.5,370.2 1589.4,376.5 1590.2,382.9 1591.1,389.3 1591.9,395.8 1592.8,402.3 1593.7,408.8 1594.5,415.4 1595.4,422.0 1596.2,428.6 1597.1,435.2 1598.0,441.9 1598.8,448.6 1599.7,455.3 1600.5,462.0 1601.4,468.8 1602.3,475.6 1603.1,482.4 1604.0,489.2 1604.8,496.0 1605.7,502.8 1606.6,509.6 1607.4,516.5 1608.3,523.3 1609.1,530.2 1610.0,537.0 1610.9,543.8 1611.7,550.7 1612.6,557.5 1613.4,564.4 1614.3,571.2 1615.2,578.0 1616.0,584.8 1616.9,591.6 1617.7,598.4 1618.6,605.2 1619.5,612.0 1620.3,618.7 1621.2,625.4 1622.0,632.1 1622.9,638.8 1623.8,645.4 1624.6,652.0 1625.5,658.6 1626.3,665.2 1627.2,671.7 1628.1,678.2 1628.9,684.7 1629.8,691.1 1630.6,697.5 1631.5,703.8 1632.4,710.2 1633.2,716.4 1634.1,722.6 1634.9,728.8 1635.8,734.9 1636.7,741.0 1637.5,747.0 1638.4,753.0 1639.2,758.9 1640.1,764.8 1641.0,770.6 1641.8,776.4 1642.7,782.1 1643.5,787.7 1644.4,793.3 1645.3,798.8 1646.1,804.2 1647.0,809.6 1647.8,814.9 1648.7,820.2 1649.6,825.3 1650.4,830.4 1651.3,835.5 1652.1,840.4 1653.0,845.3 1653.9,850.1 1654.7,854.8 1655.6,859.5 1656.4,864.0 1657.3,868.5 1658.2,872.9 1659.0,877.3 1659.9,881.5 1660.7,885.7 1661.6,889.7 1662.5,893.7 1663.3,897.6 1664.2,901.4 1665.0,905.1 1665.9,908.8 1666.8,912.3 1667.6,915.7 1668.5,919.1 1669.3,922.3 1670.2,925.5 1671.1,928.5 1671.9,931.5 1672.8,934.4 1673.6,937.1 1674.5,939.8 1675.4,942.4 1676.2,944.9 1677.1,947.2 1677.9,949.5 1678.8,951.7 1679.7,953.7 1680.5,955.7 1681.4,957.5 1682.2,959.3 1683.1,961.0 1684.0,962.5 1684.8,963.9 1685.7,965.3 1686.5,966.5 1687.4,967.6 1688.3,968.7 1689.1,969.6 1690.0,970.4 1690.8,971.1 1691.7,971.7 1692.6,972.1 1693.4,972.5 1694.3,972.8 1695.1,972.9 1696.0,973.0 1696.9,972.9 1697.7,972.8 1698.6,972.5 1699.4,972.1 1700.3,971.7 1701.2,971.1 1702.0,970.4 1702.9,969.6 1703.7,968.7 1704.6,967.6 1705.5,966.5 1706.3,965.3 1707.2,963.9 1708.0,962.5 1708.9,961.0 1709.8,959.3 1710.6,957.5 1711.5,955.7 1712.3,953.7 1713.2,951.7 1714.1,949.5 1714.9,947.2 1715.8,944.9 1716.6,942.4 1717.5,939.8 1718.4,937.1 1719.2,934.4 1720.1,931.5 1720.9,928.5 1721.8,925.5 1722.7,922.3 1723.5,919.1 1724.4,915.7 1725.2,912.3 1726.1,908.8 1727.0,905.1 1727.8,901.4 1728.7,897.6 1729.5,893.7 1730.4,889.7 1731.3,885.7 1732.1,881.5 1733.0,877.3 1733.8,872.9 1734.7,868.5 1735.6,864.0 1736.4,859.5 1737.3,854.8 1738.1,850.1 1739.0,845.3 1739.9,840.4 1740.7,835.5 1741.6,830.4 1742.4,825.3 1743.3,820.2 1744.2,814.9 1745.0,809.6 1745.9,804.2 1746.7,798.8 1747.6,793.3 1748.5,787.7 1749.3,782.1 1750.2,776.4 1751.0,770.6 1751.9,764.8 1752.8,758.9 1753.6,753.0 1754.5,747.0 1755.3,741.0 1756.2,734.9 1757.1,728.8 1757.9,722.6 1758.8,716.4 1759.6,710.2 1760.5,703.8 1761.4,697.5 1762.2,691.1 1763.1,684.7 1763.9,678.2 1764.8,671.7 1765.7,665.2 1766.5,658.6 1767.4,652.0 1768.2,645.4 1769.1,638.8 1770.0,632.1 1770.8,625.4 1771.7,618.7 1772.5,612.0 1773.4,605.2 1774.3,598.4 1775.1,591.6 1776.0,584.8 1776.8,578.0 1777.7,571.2 1778.6,564.4 1779.4,557.5 1780.3,550.7 1781.1,543.8 1782.0,537.0"/>
<polyline fill="none" stroke="#e5171c" stroke-width="2.3" stroke-linejoin="round" points="62.0,537.0 62.9,537.0 63.7,537.0 64.6,537.0 65.4,537.0 66.3,537.0 67.2,536.6 68.0,535.3 68.9,532.8 69.7,529.3 70.6,525.0 71.5,520.2 72.3,514.9 73.2,509.3 74.0,503.5 74.9,497.4 75.8,491.3 76.6,485.0 77.5,478.6 78.3,472.2 79.2,465.8 80.1,459.4 80.9,452.9 81.8,446.5 82.6,440.1 83.5,433.6 84.4,427.3 85.2,420.9 86.1,414.6 86.9,408.3 87.8,402.1 88.7,395.8 89.5,389.7 90.4,383.6 91.2,377.5 92.1,371.4 93.0,365.5 93.8,359.5 94.7,353.7 95.5,347.8 96.4,342.1 97.3,336.4 98.1,330.7 99.0,325.1 99.8,319.6 100.7,314.1 101.6,308.7 102.4,303.4 103.3,298.1 104.1,293.0 105.0,287.8 105.9,282.8 106.7,277.8 107.6,272.9 108.4,268.0 109.3,263.3 110.2,258.6 111.0,254.0 111.9,249.5 112.7,245.0 113.6,240.7 114.5,236.4 115.3,232.2 116.2,228.1 117.0,224.0 117.9,220.1 118.8,216.2 119.6,212.5 120.5,208.8 121.3,205.2 122.2,201.7 123.1,198.3 123.9,195.0 124.8,191.8 125.6,188.7 126.5,185.7 127.4,182.7 128.2,179.9 129.1,177.2 129.9,174.5 130.8,172.0 131.7,169.6 132.5,167.2 133.4,165.0 134.2,162.8 135.1,160.8 136.0,158.9 136.8,157.0 137.7,155.3 138.5,153.7 139.4,152.1 140.3,150.7 141.1,149.4 142.0,148.1 142.8,147.0 143.7,146.0 144.6,145.1 145.4,144.2 146.3,143.5 147.1,142.9 148.0,142.3 148.9,141.9 149.7,141.5 150.6,141.3 151.4,141.1 152.3,141.0 153.2,141.0 154.0,141.0 154.9,141.1 155.7,141.3 156.6,141.5 157.5,141.8 158.3,142.1 159.2,142.4 160.0,142.8 160.9,143.2 161.8,143.5 162.6,143.9 163.5,144.3 164.3,144.7 165.2,145.1 166.1,145.5 166.9,145.9 167.8,146.3 168.6,146.7 169.5,147.1 170.4,147.5 171.2,147.9 172.1,148.3 172.9,148.7 173.8,149.1 174.7,149.5 175.5,149.9 176.4,150.3 177.2,150.7 178.1,151.1 179.0,151.5 179.8,151.9 180.7,152.3 181.5,152.7 182.4,153.1 183.3,153.5 184.1,153.9 185.0,154.3 185.8,154.7 186.7,155.0 187.6,155.4 188.4,155.8 189.3,156.2 190.1,156.6 191.0,157.0 191.9,157.4 192.7,157.8 193.6,158.2 194.4,158.6 195.3,158.9 196.2,159.3 197.0,159.7 197.9,160.1 198.7,160.5 199.6,160.9 200.5,161.3 201.3,161.7 202.2,162.0 203.0,162.4 203.9,162.8 204.8,163.2 205.6,163.6 206.5,164.0 207.3,164.3 208.2,164.7 209.1,165.1 209.9,165.5 210.8,165.9 211.6,166.3 212.5,166.6 213.4,167.0 214.2,167.4 215.1,167.8 215.9,168.1 216.8,168.5 217.7,168.9 218.5,169.3 219.4,169.7 220.2,170.0 221.1,170.4 222.0,170.8 222.8,171.2 223.7,171.5 224.5,171.9 225.4,172.3 226.3,172.7 227.1,173.0 228.0,173.4 228.8,173.8 229.7,174.2 230.6,174.5 231.4,174.9 232.3,175.3 233.1,175.6 234.0,176.0 234.9,176.4 235.7,176.8 236.6,177.1 237.4,177.5 238.3,177.9 239.2,178.2 240.0,178.6 240.9,179.0 241.7,179.3 242.6,179.7 243.5,180.1 244.3,180.4 245.2,180.8 246.0,181.2 246.9,181.5 247.8,181.9 248.6,182.3 249.5,182.6 250.3,183.0 251.2,183.4 252.1,183.7 252.9,184.1 253.8,184.4 254.6,184.8 255.5,185.2 256.4,185.5 257.2,185.9 258.1,186.2 258.9,186.6 259.8,187.0 260.7,187.3 261.5,187.7 262.4,188.0 263.2,188.4 264.1,188.8 265.0,189.1 265.8,189.5 266.7,189.8 267.5,190.2 268.4,190.5 269.3,190.9 270.1,191.3 271.0,191.6 271.8,192.0 272.7,192.3 273.6,192.7 274.4,193.0 275.3,193.4 276.1,193.7 277.0,194.1 277.9,194.4 278.7,194.8 279.6,195.1 280.4,195.5 281.3,195.8 282.2,196.2 283.0,196.5 283.9,196.9 284.7,197.2 285.6,197.6 286.5,197.9 287.3,198.3 288.2,198.6 289.0,199.0 289.9,199.2 290.8,199.4 291.6,199.2 292.5,198.5 293.3,197.2 294.2,195.6 295.1,193.6 295.9,191.4 296.8,189.0 297.6,186.5 298.5,184.0 299.4,181.5 300.2,178.9 301.1,176.4 301.9,173.9 302.8,171.5 303.7,169.2 304.5,166.9 305.4,164.8 306.2,162.7 307.1,160.7 308.0,158.8 308.8,156.9 309.7,155.2 310.5,153.6 311.4,152.1 312.3,150.7 313.1,149.3 314.0,148.1 314.8,147.0 315.7,146.0 316.6,145.1 317.4,144.2 318.3,143.5 319.1,142.9 320.0,142.3 320.9,141.9 321.7,141.5 322.6,141.3 323.4,141.1 324.3,141.0 325.2,141.0 326.0,141.0 326.9,141.1 327.7,141.3 328.6,141.5 329.5,141.8 330.3,142.1 331.2,142.4 332.0,142.8 332.9,143.2 333.8,143.5 334.6,143.9 335.5,144.3 336.3,144.7 337.2,145.1 338.1,145.5 338.9,145.9 339.8,146.3 340.6,146.7 341.5,147.1 342.4,147.5 343.2,147.9 344.1,148.3 344.9,148.7 345.8,149.1 346.7,149.5 347.5,149.9 348.4,150.3 349.2,150.7 350.1,151.1 351.0,151.5 351.8,151.9 352.7,152.3 353.5,152.7 354.4,153.1 355.3,153.5 356.1,153.9 357.0,154.3 357.8,154.7 358.7,155.0 359.6,155.4 360.4,155.8 361.3,156.2 362.1,156.6 363.0,157.0 363.9,157.4 364.7,157.8 365.6,158.2 366.4,158.6 367.3,158.9 368.2,159.3 369.0,159.7 369.9,160.1 370.7,160.5 371.6,160.9 372.5,161.3 373.3,161.7 374.2,162.0 375.0,162.4 375.9,162.8 376.8,163.2 377.6,163.6 378.5,164.0 379.3,164.3 380.2,164.7 381.1,165.1 381.9,165.5 382.8,165.9 383.6,166.3 384.5,166.6 385.4,167.0 386.2,167.4 387.1,167.8 387.9,168.1 388.8,168.5 389.7,168.9 390.5,169.3 391.4,169.7 392.2,170.0 393.1,170.4 394.0,170.8 394.8,171.2 395.7,171.5 396.5,171.9 397.4,172.3 398.3,172.7 399.1,173.0 400.0,173.4 400.8,173.8 401.7,174.2 402.6,174.5 403.4,174.9 404.3,175.3 405.1,175.6 406.0,176.0 406.9,176.4 407.7,176.8 408.6,177.1 409.4,177.5 410.3,177.9 411.2,178.2 412.0,178.6 412.9,179.0 413.7,179.3 414.6,179.7 415.5,180.1 416.3,180.4 417.2,180.8 418.0,181.2 418.9,181.5 419.8,181.9 420.6,182.3 421.5,182.6 422.3,183.0 423.2,183.4 424.1,183.7 424.9,184.1 425.8,184.4 426.6,184.8 427.5,185.2 428.4,185.5 429.2,185.9 430.1,186.2 430.9,186.6 431.8,187.0 432.7,187.3 433.5,187.7 434.4,188.0 435.2,188.4 436.1,188.8 437.0,189.1 437.8,189.5 438.7,189.8 439.5,190.2 440.4,190.5 441.3,190.9 442.1,191.3 443.0,191.6 443.8,192.0 444.7,192.3 445.6,192.7 446.4,193.0 447.3,193.4 448.1,193.7 449.0,194.1 449.9,194.4 450.7,194.8 451.6,195.1 452.4,195.5 453.3,195.8 454.2,196.2 455.0,196.5 455.9,196.9 456.7,197.2 457.6,197.6 458.5,197.9 459.3,198.3 460.2,198.6 461.0,199.0 461.9,199.2 462.8,199.4 463.6,199.2 464.5,198.5 465.3,197.2 466.2,195.6 467.1,193.6 467.9,191.4 468.8,189.0 469.6,186.5 470.5,184.0 471.4,181.5 472.2,178.9 473.1,176.4 473.9,173.9 474.8,171.5 475.7,169.2 476.5,166.9 477.4,164.8 478.2,162.7 479.1,160.7 480.0,158.8 480.8,156.9 481.7,155.2 482.5,153.6 483.4,152.1 484.3,150.7 485.1,149.3 486.0,148.1 486.8,147.0 487.7,146.0 488.6,145.1 489.4,144.2 490.3,143.5 491.1,142.9 492.0,142.3 492.9,141.9 493.7,141.5 494.6,141.3 495.4,141.1 496.3,141.0 497.2,141.0 498.0,141.0 498.9,141.1 499.7,141.3 500.6,141.5 501.5,141.8 502.3,142.1 503.2,142.4 504.0,142.8 504.9,143.2 505.8,143.5 506.6,143.9 507.5,144.3 508.3,144.7 509.2,145.1 510.1,145.5 510.9,145.9 511.8,146.3 512.6,146.7 513.5,147.1 514.4,147.5 515.2,147.9 516.1,148.3 516.9,148.7 517.8,149.1 518.7,149.5 519.5,149.9 520.4,150.3 521.2,150.7 522.1,151.1 523.0,151.5 523.8,151.9 524.7,152.3 525.5,152.7 526.4,153.1 527.3,153.5 528.1,153.9 529.0,154.3 529.8,154.7 530.7,155.0 531.6,155.4 532.4,155.8 533.3,156.2 534.1,156.6 535.0,157.0 535.9,157.4 536.7,157.8 537.6,158.2 538.4,158.6 539.3,158.9 540.2,159.3 541.0,159.7 541.9,160.1 542.7,160.5 543.6,160.9 544.5,161.3 545.3,161.7 546.2,162.0 547.0,162.4 547.9,162.8 548.8,163.2 549.6,163.6 550.5,164.0 551.3,164.3 552.2,164.7 553.1,165.1 553.9,165.5 554.8,165.9 555.6,166.3 556.5,166.6 557.4,167.0 558.2,167.4 559.1,167.8 559.9,168.1 560.8,168.5 561.7,168.9 562.5,169.3 563.4,169.7 564.2,170.0 565.1,170.4 566.0,170.8 566.8,171.2 567.7,171.5 568.5,171.9 569.4,172.3 570.3,172.7 571.1,173.0 572.0,173.4 572.8,173.8 573.7,174.2 574.6,174.5 575.4,174.9 576.3,175.3 577.1,175.6 578.0,176.0 578.9,176.4 579.7,176.8 580.6,177.1 581.4,177.5 582.3,177.9 583.2,178.2 584.0,178.6 584.9,179.0 585.7,179.3 586.6,179.7 587.5,180.1 588.3,180.4 589.2,180.8 590.0,181.2 590.9,181.5 591.8,181.9 592.6,182.3 593.5,182.6 594.3,183.0 595.2,183.4 596.1,183.7 596.9,184.1 597.8,184.4 598.6,184.8 599.5,185.2 600.4,185.5 601.2,185.9 602.1,186.2 602.9,186.6 603.8,187.0 604.7,187.3 605.5,187.7 606.4,188.0 607.2,188.4 608.1,188.8 609.0,189.1 609.8,189.5 610.7,189.8 611.5,190.2 612.4,190.5 613.3,190.9 614.1,191.3 615.0,191.6 615.8,192.0 616.7,192.3 617.6,192.7 618.4,193.0 619.3,193.4 620.1,193.7 621.0,194.1 621.9,194.4 622.7,194.8 623.6,195.1 624.4,195.5 625.3,195.8 626.2,196.2 627.0,196.5 627.9,196.9 628.7,197.2 629.6,197.6 630.5,197.9 631.3,198.3 632.2,198.6 633.0,199.0 633.9,199.2 634.8,199.4 635.6,199.2 636.5,198.5 637.3,197.2 638.2,195.6 639.1,193.6 639.9,191.4 640.8,189.0 641.6,186.5 642.5,184.0 643.4,181.5 644.2,178.9 645.1,176.4 645.9,173.9 646.8,171.5 647.7,169.2 648.5,166.9 649.4,164.8 650.2,162.7 651.1,160.7 652.0,158.8 652.8,156.9 653.7,155.2 654.5,153.6 655.4,152.1 656.3,150.7 657.1,149.3 658.0,148.1 658.8,147.0 659.7,146.0 660.6,145.1 661.4,144.2 662.3,143.5 663.1,142.9 664.0,142.3 664.9,141.9 665.7,141.5 666.6,141.3 667.4,141.1 668.3,141.0 669.2,141.0 670.0,141.0 670.9,141.1 671.7,141.3 672.6,141.5 673.5,141.8 674.3,142.1 675.2,142.4 676.0,142.8 676.9,143.2 677.8,143.5 678.6,143.9 679.5,144.3 680.3,144.7 681.2,145.1 682.1,145.5 682.9,145.9 683.8,146.3 684.6,146.7 685.5,147.1 686.4,147.5 687.2,147.9 688.1,148.3 688.9,148.7 689.8,149.1 690.7,149.5 691.5,149.9 692.4,150.3 693.2,150.7 694.1,151.1 695.0,151.5 695.8,151.9 696.7,152.3 697.5,152.7 698.4,153.1 699.3,153.5 700.1,153.9 701.0,154.3 701.8,154.7 702.7,155.0 703.6,155.4 704.4,155.8 705.3,156.2 706.1,156.6 707.0,157.0 707.9,157.4 708.7,157.8 709.6,158.2 710.4,158.6 711.3,158.9 712.2,159.3 713.0,159.7 713.9,160.1 714.7,160.5 715.6,160.9 716.5,161.3 717.3,161.7 718.2,162.0 719.0,162.4 719.9,162.8 720.8,163.2 721.6,163.6 722.5,164.0 723.3,164.3 724.2,164.7 725.1,165.1 725.9,165.5 726.8,165.9 727.6,166.3 728.5,166.6 729.4,167.0 730.2,167.4 731.1,167.8 731.9,168.1 732.8,168.5 733.7,168.9 734.5,169.3 735.4,169.7 736.2,170.0 737.1,170.4 738.0,170.8 738.8,171.2 739.7,171.5 740.5,171.9 741.4,172.3 742.3,172.7 743.1,173.0 744.0,173.4 744.8,173.8 745.7,174.2 746.6,174.5 747.4,174.9 748.3,175.3 749.1,175.6 750.0,176.0 750.9,176.4 751.7,176.8 752.6,177.1 753.4,177.5 754.3,177.9 755.2,178.2 756.0,178.6 756.9,179.0 757.7,179.3 758.6,179.7 759.5,180.1 760.3,180.4 761.2,180.8 762.0,181.2 762.9,181.5 763.8,181.9 764.6,182.3 765.5,182.6 766.3,183.0 767.2,183.4 768.1,183.7 768.9,184.1 769.8,184.4 770.6,184.8 771.5,185.2 772.4,185.5 773.2,185.9 774.1,186.2 774.9,186.6 775.8,187.0 776.7,187.3 777.5,187.7 778.4,188.0 779.2,188.4 780.1,188.8 781.0,189.1 781.8,189.5 782.7,189.8 783.5,190.2 784.4,190.5 785.3,190.9 786.1,191.3 787.0,191.6 787.8,192.0 788.7,192.3 789.6,192.7 790.4,193.0 791.3,193.4 792.1,193.7 793.0,194.1 793.9,194.4 794.7,194.8 795.6,195.1 796.4,195.5 797.3,195.8 798.2,196.2 799.0,196.5 799.9,196.9 800.7,197.2 801.6,197.6 802.5,197.9 803.3,198.3 804.2,198.6 805.0,199.0 805.9,199.2 806.8,199.4 807.6,199.2 808.5,198.5 809.3,197.2 810.2,195.6 811.1,193.6 811.9,191.4 812.8,189.0 813.6,186.5 814.5,184.0 815.4,181.5 816.2,178.9 817.1,176.4 817.9,173.9 818.8,171.5 819.7,169.2 820.5,166.9 821.4,164.8 822.2,162.7 823.1,160.7 824.0,158.8 824.8,156.9 825.7,155.2 826.5,153.6 827.4,152.1 828.3,150.7 829.1,149.3 830.0,148.1 830.8,147.0 831.7,146.0 832.6,145.1 833.4,144.2 834.3,143.5 835.1,142.9 836.0,142.3 836.9,141.9 837.7,141.5 838.6,141.3 839.4,141.1 840.3,141.0 841.2,141.0 842.0,141.0 842.9,141.1 843.7,141.3 844.6,141.5 845.5,141.8 846.3,142.1 847.2,142.4 848.0,142.8 848.9,143.2 849.8,143.5 850.6,143.9 851.5,144.3 852.3,144.7 853.2,145.1 854.1,145.5 854.9,145.9 855.8,146.3 856.6,146.7 857.5,147.1 858.4,147.5 859.2,147.9 860.1,148.3 860.9,148.7 861.8,149.1 862.7,149.5 863.5,149.9 864.4,150.3 865.2,150.7 866.1,151.1 867.0,151.5 867.8,151.9 868.7,152.3 869.5,152.7 870.4,153.1 871.3,153.5 872.1,153.9 873.0,154.3 873.8,154.7 874.7,155.0 875.6,155.4 876.4,155.8 877.3,156.2 878.1,156.6 879.0,157.0 879.9,157.4 880.7,157.8 881.6,158.2 882.4,158.6 883.3,158.9 884.2,159.3 885.0,159.7 885.9,160.1 886.7,160.5 887.6,160.9 888.5,161.3 889.3,161.7 890.2,162.0 891.0,162.4 891.9,162.8 892.8,163.2 893.6,163.6 894.5,164.0 895.3,164.3 896.2,164.7 897.1,165.1 897.9,165.5 898.8,165.9 899.6,166.3 900.5,166.6 901.4,167.0 902.2,167.4 903.1,167.8 903.9,168.1 904.8,168.5 905.7,168.9 906.5,169.3 907.4,169.7 908.2,170.0 909.1,170.4 910.0,170.8 910.8,171.2 911.7,171.5 912.5,171.9 913.4,172.3 914.3,172.7 915.1,173.0 916.0,173.4 916.8,173.8 917.7,174.2 918.6,174.5 919.4,174.9 920.3,175.3 921.1,175.6 922.0,176.0 922.9,176.4 923.7,176.8 924.6,177.1 925.4,177.5 926.3,177.9 927.2,178.2 928.0,178.6 928.9,179.0 929.7,179.3 930.6,179.7 931.5,180.1 932.3,180.4 933.2,180.8 934.0,181.2 934.9,181.5 935.8,181.9 936.6,182.3 937.5,182.6 938.3,183.0 939.2,183.4 940.1,183.7 940.9,184.1 941.8,184.4 942.6,184.8 943.5,185.2 944.4,185.5 945.2,185.9 946.1,186.2 946.9,186.6 947.8,187.0 948.7,187.3 949.5,187.7 950.4,188.0 951.2,188.4 952.1,188.8 953.0,189.1 953.8,189.5 954.7,189.8 955.5,190.2 956.4,190.5 957.3,190.9 958.1,191.3 959.0,191.6 959.8,192.0 960.7,192.3 961.6,192.7 962.4,193.0 963.3,193.4 964.1,193.7 965.0,194.1 965.9,194.4 966.7,194.8 967.6,195.1 968.4,195.5 969.3,195.8 970.2,196.2 971.0,196.5 971.9,196.9 972.7,197.2 973.6,197.6 974.5,197.9 975.3,198.3 976.2,198.6 977.0,199.0 977.9,199.2 978.8,199.4 979.6,199.2 980.5,198.5 981.3,197.2 982.2,195.6 983.1,193.6 983.9,191.4 984.8,189.0 985.6,186.5 986.5,184.0 987.4,181.5 988.2,178.9 989.1,176.4 989.9,173.9 990.8,171.5 991.7,169.2 992.5,166.9 993.4,164.8 994.2,162.7 995.1,160.7 996.0,158.8 996.8,156.9 997.7,155.2 998.5,153.6 999.4,152.1 1000.3,150.7 1001.1,149.3 1002.0,148.1 1002.8,147.0 1003.7,146.0 1004.6,145.1 1005.4,144.2 1006.3,143.5 1007.1,142.9 1008.0,142.3 1008.9,141.9 1009.7,141.5 1010.6,141.3 1011.4,141.1 1012.3,141.0 1013.2,141.0 1014.0,141.0 1014.9,141.1 1015.7,141.3 1016.6,141.5 1017.5,141.8 1018.3,142.1 1019.2,142.4 1020.0,142.8 1020.9,143.2 1021.8,143.5 1022.6,143.9 1023.5,144.3 1024.3,144.7 1025.2,145.1 1026.1,145.5 1026.9,145.9 1027.8,146.3 1028.6,146.7 1029.5,147.1 1030.4,147.5 1031.2,147.9 1032.1,148.3 1032.9,148.7 1033.8,149.1 1034.7,149.5 1035.5,149.9 1036.4,150.3 1037.2,150.7 1038.1,151.1 1039.0,151.5 1039.8,151.9 1040.7,152.3 1041.5,152.7 1042.4,153.1 1043.3,153.5 1044.1,153.9 1045.0,154.3 1045.8,154.7 1046.7,155.0 1047.6,155.4 1048.4,155.8 1049.3,156.2 1050.1,156.6 1051.0,157.0 1051.9,157.4 1052.7,157.8 1053.6,158.2 1054.4,158.6 1055.3,158.9 1056.2,159.3 1057.0,159.7 1057.9,160.1 1058.7,160.5 1059.6,160.9 1060.5,161.3 1061.3,161.7 1062.2,162.0 1063.0,162.4 1063.9,162.8 1064.8,163.2 1065.6,163.6 1066.5,164.0 1067.3,164.3 1068.2,164.7 1069.1,165.1 1069.9,165.5 1070.8,165.9 1071.6,166.3 1072.5,166.6 1073.4,167.0 1074.2,167.4 1075.1,167.8 1075.9,168.1 1076.8,168.5 1077.7,168.9 1078.5,169.3 1079.4,169.7 1080.2,170.0 1081.1,170.4 1082.0,170.8 1082.8,171.2 1083.7,171.5 1084.5,171.9 1085.4,172.3 1086.3,172.7 1087.1,173.0 1088.0,173.4 1088.8,173.8 1089.7,174.2 1090.6,174.5 1091.4,174.9 1092.3,175.3 1093.1,175.6 1094.0,176.0 1094.9,176.4 1095.7,176.8 1096.6,177.1 1097.4,177.5 1098.3,177.9 1099.2,178.2 1100.0,178.6 1100.9,179.0 1101.7,179.3 1102.6,179.7 1103.5,180.1 1104.3,180.4 1105.2,180.8 1106.0,181.2 1106.9,181.5 1107.8,181.9 1108.6,182.3 1109.5,182.6 1110.3,183.0 1111.2,183.4 1112.1,183.7 1112.9,184.1 1113.8,184.4 1114.6,184.8 1115.5,185.2 1116.4,185.5 1117.2,185.9 1118.1,186.2 1118.9,186.6 1119.8,187.0 1120.7,187.3 1121.5,187.7 1122.4,188.0 1123.2,188.4 1124.1,188.8 1125.0,189.1 1125.8,189.5 1126.7,189.8 1127.5,190.2 1128.4,190.5 1129.3,190.9 1130.1,191.3 1131.0,191.6 1131.8,192.0 1132.7,192.3 1133.6,192.7 1134.4,193.0 1135.3,193.4 1136.1,193.7 1137.0,194.1 1137.9,194.4 1138.7,194.8 1139.6,195.1 1140.4,195.5 1141.3,195.8 1142.2,196.2 1143.0,196.5 1143.9,196.9 1144.7,197.2 1145.6,197.6 1146.5,197.9 1147.3,198.3 1148.2,198.6 1149.0,199.0 1149.9,199.2 1150.8,199.4 1151.6,199.2 1152.5,198.5 1153.3,197.2 1154.2,195.6 1155.1,193.6 1155.9,191.4 1156.8,189.0 1157.6,186.5 1158.5,184.0 1159.4,181.5 1160.2,178.9 1161.1,176.4 1161.9,173.9 1162.8,171.5 1163.7,169.2 1164.5,166.9 1165.4,164.8 1166.2,162.7 1167.1,160.7 1168.0,158.8 1168.8,156.9 1169.7,155.2 1170.5,153.6 1171.4,152.1 1172.3,150.7 1173.1,149.3 1174.0,148.1 1174.8,147.0 1175.7,146.0 1176.6,145.1 1177.4,144.2 1178.3,143.5 1179.1,142.9 1180.0,142.3 1180.9,141.9 1181.7,141.5 1182.6,141.3 1183.4,141.1 1184.3,141.0 1185.2,141.0 1186.0,141.0 1186.9,141.1 1187.7,141.3 1188.6,141.5 1189.5,141.8 1190.3,142.1 1191.2,142.4 1192.0,142.8 1192.9,143.2 1193.8,143.5 1194.6,143.9 1195.5,144.3 1196.3,144.7 1197.2,145.1 1198.1,145.5 1198.9,145.9 1199.8,146.3 1200.6,146.7 1201.5,147.1 1202.4,147.5 1203.2,147.9 1204.1,148.3 1204.9,148.7 1205.8,149.1 1206.7,149.5 1207.5,149.9 1208.4,150.3 1209.2,150.7 1210.1,151.1 1211.0,151.5 1211.8,151.9 1212.7,152.3 1213.5,152.7 1214.4,153.1 1215.3,153.5 1216.1,153.9 1217.0,154.3 1217.8,154.7 1218.7,155.0 1219.6,155.4 1220.4,155.8 1221.3,156.2 1222.1,156.6 1223.0,157.0 1223.9,157.4 1224.7,157.8 1225.6,158.2 1226.4,158.6 1227.3,158.9 1228.2,159.3 1229.0,159.7 1229.9,160.1 1230.7,160.5 1231.6,160.9 1232.5,161.3 1233.3,161.7 1234.2,162.0 1235.0,162.4 1235.9,162.8 1236.8,163.2 1237.6,163.6 1238.5,164.0 1239.3,164.3 1240.2,164.7 1241.1,165.1 1241.9,165.5 1242.8,165.9 1243.6,166.3 1244.5,166.6 1245.4,167.0 1246.2,167.4 1247.1,167.8 1247.9,168.1 1248.8,168.5 1249.7,168.9 1250.5,169.3 1251.4,169.7 1252.2,170.0 1253.1,170.4 1254.0,170.8 1254.8,171.2 1255.7,171.5 1256.5,171.9 1257.4,172.3 1258.3,172.7 1259.1,173.0 1260.0,173.4 1260.8,173.8 1261.7,174.2 1262.6,174.5 1263.4,174.9 1264.3,175.3 1265.1,175.6 1266.0,176.0 1266.9,176.4 1267.7,176.8 1268.6,177.1 1269.4,177.5 1270.3,177.9 1271.2,178.2 1272.0,178.6 1272.9,179.0 1273.7,179.3 1274.6,179.7 1275.5,180.1 1276.3,180.4 1277.2,180.8 1278.0,181.2 1278.9,181.5 1279.8,181.9 1280.6,182.3 1281.5,182.6 1282.3,183.0 1283.2,183.4 1284.1,183.7 1284.9,184.1 1285.8,184.4 1286.6,184.8 1287.5,185.2 1288.4,185.5 1289.2,185.9 1290.1,186.2 1290.9,186.6 1291.8,187.0 1292.7,187.3 1293.5,187.7 1294.4,188.0 1295.2,188.4 1296.1,188.8 1297.0,189.1 1297.8,189.5 1298.7,189.8 1299.5,190.2 1300.4,190.5 1301.3,190.9 1302.1,191.3 1303.0,191.6 1303.8,192.0 1304.7,192.3 1305.6,192.7 1306.4,193.0 1307.3,193.4 1308.1,193.7 1309.0,194.1 1309.9,194.4 1310.7,194.8 1311.6,195.1 1312.4,195.5 1313.3,195.8 1314.2,196.2 1315.0,196.5 1315.9,196.9 1316.7,197.2 1317.6,197.6 1318.5,197.9 1319.3,198.3 1320.2,198.6 1321.0,199.0 1321.9,199.2 1322.8,199.4 1323.6,199.2 1324.5,198.5 1325.3,197.2 1326.2,195.6 1327.1,193.6 1327.9,191.4 1328.8,189.0 1329.6,186.5 1330.5,184.0 1331.4,181.5 1332.2,178.9 1333.1,176.4 1333.9,173.9 1334.8,171.5 1335.7,169.2 1336.5,166.9 1337.4,164.8 1338.2,162.7 1339.1,160.7 1340.0,158.8 1340.8,156.9 1341.7,155.2 1342.5,153.6 1343.4,152.1 1344.3,150.7 1345.1,149.3 1346.0,148.1 1346.8,147.0 1347.7,146.0 1348.6,145.1 1349.4,144.2 1350.3,143.5 1351.1,142.9 1352.0,142.3 1352.9,141.9 1353.7,141.5 1354.6,141.3 1355.4,141.1 1356.3,141.0 1357.2,141.0 1358.0,141.0 1358.9,141.1 1359.7,141.3 1360.6,141.5 1361.5,141.8 1362.3,142.1 1363.2,142.4 1364.0,142.8 1364.9,143.2 1365.8,143.5 1366.6,143.9 1367.5,144.3 1368.3,144.7 1369.2,145.1 1370.1,145.5 1370.9,145.9 1371.8,146.3 1372.6,146.7 1373.5,147.1 1374.4,147.5 1375.2,147.9 1376.1,148.3 1376.9,148.7 1377.8,149.1 1378.7,149.5 1379.5,149.9 1380.4,150.3 1381.2,150.7 1382.1,151.1 1383.0,151.5 1383.8,151.9 1384.7,152.3 1385.5,152.7 1386.4,153.1 1387.3,153.5 1388.1,153.9 1389.0,154.3 1389.8,154.7 1390.7,155.0 1391.6,155.4 1392.4,155.8 1393.3,156.2 1394.1,156.6 1395.0,157.0 1395.9,157.4 1396.7,157.8 1397.6,158.2 1398.4,158.6 1399.3,158.9 1400.2,159.3 1401.0,159.7 1401.9,160.1 1402.7,160.5 1403.6,160.9 1404.5,161.3 1405.3,161.7 1406.2,162.0 1407.0,162.4 1407.9,162.8 1408.8,163.2 1409.6,163.6 1410.5,164.0 1411.3,164.3 1412.2,164.7 1413.1,165.1 1413.9,165.5 1414.8,165.9 1415.6,166.3 1416.5,166.6 1417.4,167.0 1418.2,167.4 1419.1,167.8 1419.9,168.1 1420.8,168.5 1421.7,168.9 1422.5,169.3 1423.4,169.7 1424.2,170.0 1425.1,170.4 1426.0,170.8 1426.8,171.2 1427.7,171.5 1428.5,171.9 1429.4,172.3 1430.3,172.7 1431.1,173.0 1432.0,173.4 1432.8,173.8 1433.7,174.2 1434.6,174.5 1435.4,174.9 1436.3,175.3 1437.1,175.6 1438.0,176.0 1438.9,176.4 1439.7,176.8 1440.6,177.1 1441.4,177.5 1442.3,177.9 1443.2,178.2 1444.0,178.6 1444.9,179.0 1445.7,179.3 1446.6,179.7 1447.5,180.1 1448.3,180.4 1449.2,180.8 1450.0,181.2 1450.9,181.5 1451.8,181.9 1452.6,182.3 1453.5,182.6 1454.3,183.0 1455.2,183.4 1456.1,183.7 1456.9,184.1 1457.8,184.4 1458.6,184.8 1459.5,185.2 1460.4,185.5 1461.2,185.9 1462.1,186.2 1462.9,186.6 1463.8,187.0 1464.7,187.3 1465.5,187.7 1466.4,188.0 1467.2,188.4 1468.1,188.8 1469.0,189.1 1469.8,189.5 1470.7,189.8 1471.5,190.2 1472.4,190.5 1473.3,190.9 1474.1,191.3 1475.0,191.6 1475.8,192.0 1476.7,192.3 1477.6,192.7 1478.4,193.0 1479.3,193.4 1480.1,193.7 1481.0,194.1 1481.9,194.4 1482.7,194.8 1483.6,195.1 1484.4,195.5 1485.3,195.8 1486.2,196.2 1487.0,196.5 1487.9,196.9 1488.7,197.2 1489.6,197.6 1490.5,197.9 1491.3,198.3 1492.2,198.6 1493.0,199.0 1493.9,199.2 1494.8,199.4 1495.6,199.2 1496.5,198.5 1497.3,197.2 1498.2,195.6 1499.1,193.6 1499.9,191.4 1500.8,189.0 1501.6,186.5 1502.5,184.0 1503.4,181.5 1504.2,178.9 1505.1,176.4 1505.9,173.9 1506.8,171.5 1507.7,169.2 1508.5,166.9 1509.4,164.8 1510.2,162.7 1511.1,160.7 1512.0,158.8 1512.8,156.9 1513.7,155.2 1514.5,153.6 1515.4,152.1 1516.3,150.7 1517.1,149.3 1518.0,148.1 1518.8,147.0 1519.7,146.0 1520.6,145.1 1521.4,144.2 1522.3,143.5 1523.1,142.9 1524.0,142.3 1524.9,141.9 1525.7,141.5 1526.6,141.3 1527.4,141.1 1528.3,141.0 1529.2,141.0 1530.0,141.0 1530.9,141.1 1531.7,141.3 1532.6,141.5 1533.5,141.8 1534.3,142.1 1535.2,142.4 1536.0,142.8 1536.9,143.2 1537.8,143.5 1538.6,143.9 1539.5,144.3 1540.3,144.7 1541.2,145.1 1542.1,145.5 1542.9,145.9 1543.8,146.3 1544.6,146.7 1545.5,147.1 1546.4,147.5 1547.2,147.9 1548.1,148.3 1548.9,148.7 1549.8,149.1 1550.7,149.5 1551.5,149.9 1552.4,150.3 1553.2,150.7 1554.1,151.1 1555.0,151.5 1555.8,151.9 1556.7,152.3 1557.5,152.7 1558.4,153.1 1559.3,153.5 1560.1,153.9 1561.0,154.3 1561.8,154.7 1562.7,155.0 1563.6,155.4 1564.4,155.8 1565.3,156.2 1566.1,156.6 1567.0,157.0 1567.9,157.4 1568.7,157.8 1569.6,158.2 1570.4,158.6 1571.3,158.9 1572.2,159.3 1573.0,159.7 1573.9,160.1 1574.7,160.5 1575.6,160.9 1576.5,161.3 1577.3,161.7 1578.2,162.0 1579.0,162.4 1579.9,162.8 1580.8,163.2 1581.6,163.6 1582.5,164.0 1583.3,164.3 1584.2,164.7 1585.1,165.1 1585.9,165.5 1586.8,165.9 1587.6,166.3 1588.5,166.6 1589.4,167.0 1590.2,167.4 1591.1,167.8 1591.9,168.1 1592.8,168.5 1593.7,168.9 1594.5,169.3 1595.4,169.7 1596.2,170.0 1597.1,170.4 1598.0,170.8 1598.8,171.2 1599.7,171.5 1600.5,171.9 1601.4,172.3 1602.3,172.7 1603.1,173.0 1604.0,173.4 1604.8,173.8 1605.7,174.2 1606.6,174.5 1607.4,174.9 1608.3,175.3 1609.1,175.6 1610.0,176.0 1610.9,176.4 1611.7,176.8 1612.6,177.1 1613.4,177.5 1614.3,177.9 1615.2,178.2 1616.0,178.6 1616.9,179.0 1617.7,179.3 1618.6,179.7 1619.5,180.1 1620.3,180.4 1621.2,180.8 1622.0,181.2 1622.9,181.5 1623.8,181.9 1624.6,182.3 1625.5,182.6 1626.3,183.0 1627.2,183.4 1628.1,183.7 1628.9,184.1 1629.8,184.4 1630.6,184.8 1631.5,185.2 1632.4,185.5 1633.2,185.9 1634.1,186.2 1634.9,186.6 1635.8,187.0 1636.7,187.3 1637.5,187.7 1638.4,188.0 1639.2,188.4 1640.1,188.8 1641.0,189.1 1641.8,189.5 1642.7,189.8 1643.5,190.2 1644.4,190.5 1645.3,190.9 1646.1,191.3 1647.0,191.6 1647.8,192.0 1648.7,192.3 1649.6,192.7 1650.4,193.0 1651.3,193.4 1652.1,193.7 1653.0,194.1 1653.9,194.4 1654.7,194.8 1655.6,195.1 1656.4,195.5 1657.3,195.8 1658.2,196.2 1659.0,196.5 1659.9,196.9 1660.7,197.2 1661.6,197.6 1662.5,197.9 1663.3,198.3 1664.2,198.6 1665.0,199.0 1665.9,199.2 1666.8,199.4 1667.6,199.2 1668.5,198.5 1669.3,197.2 1670.2,195.6 1671.1,193.6 1671.9,191.4 1672.8,189.0 1673.6,186.5 1674.5,184.0 1675.4,181.5 1676.2,178.9 1677.1,176.4 1677.9,173.9 1678.8,171.5 1679.7,169.2 1680.5,166.9 1681.4,164.8 1682.2,162.7 1683.1,160.7 1684.0,158.8 1684.8,156.9 1685.7,155.2 1686.5,153.6 1687.4,152.1 1688.3,150.7 1689.1,149.3 1690.0,148.1 1690.8,147.0 1691.7,146.0 1692.6,145.1 1693.4,144.2 1694.3,143.5 1695.1,142.9 1696.0,142.3 1696.9,141.9 1697.7,141.5 1698.6,141.3 1699.4,141.1 1700.3,141.0 1701.2,141.0 1702.0,141.0 1702.9,141.1 1703.7,141.3 1704.6,141.5 1705.5,141.8 1706.3,142.1 1707.2,142.4 1708.0,142.8 1708.9,143.2 1709.8,143.5 1710.6,143.9 1711.5,144.3 1712.3,144.7 1713.2,145.1 1714.1,145.5 1714.9,145.9 1715.8,146.3 1716.6,146.7 1717.5,147.1 1718.4,147.5 1719.2,147.9 1720.1,148.3 1720.9,148.7 1721.8,149.1 1722.7,149.5 1723.5,149.9 1724.4,150.3 1725.2,150.7 1726.1,151.1 1727.0,151.5 1727.8,151.9 1728.7,152.3 1729.5,152.7 1730.4,153.1 1731.3,153.5 1732.1,153.9 1733.0,154.3 1733.8,154.7 1734.7,155.0 1735.6,155.4 1736.4,155.8 1737.3,156.2 1738.1,156.6 1739.0,157.0 1739.9,157.4 1740.7,157.8 1741.6,158.2 1742.4,158.6 1743.3,158.9 1744.2,159.3 1745.0,159.7 1745.9,160.1 1746.7,160.5 1747.6,160.9 1748.5,161.3 1749.3,161.7 1750.2,162.0 1751.0,162.4 1751.9,162.8 1752.8,163.2 1753.6,163.6 1754.5,164.0 1755.3,164.3 1756.2,164.7 1757.1,165.1 1757.9,165.5 1758.8,165.9 1759.6,166.3 1760.5,166.6 1761.4,167.0 1762.2,167.4 1763.1,167.8 1763.9,168.1 1764.8,168.5 1765.7,168.9 1766.5,169.3 1767.4,169.7 1768.2,170.0 1769.1,170.4 1770.0,170.8 1770.8,171.2 1771.7,171.5 1772.5,171.9 1773.4,172.3 1774.3,172.7 1775.1,173.0 1776.0,173.4 1776.8,173.8 1777.7,174.2 1778.6,174.5 1779.4,174.9 1780.3,175.3 1781.1,175.6 1782.0,176.0"/>
<line x1="62" y1="63" x2="148" y2="63" stroke="#e5171c" stroke-width="2" shape-rendering="crispEdges"/>
<line x1="880" y1="63" x2="967" y2="63" stroke="#1a16d2" stroke-width="2" shape-rendering="crispEdges"/>
<g fill="#fff" font-size="12.5" text-anchor="middle" transform="scale(0.8,1)"><text x="36.56" y="69" font-family="Liberation Mono">U</text><text x="44.06" y="69" font-family="Liberation Mono">n</text><text x="51.56" y="69" font-family="Liberation Mono">i</text><text x="59.06" y="69" font-family="Liberation Mono">t</text><text x="66.56" y="69" font-family="Liberation Mono">s</text><text x="196.56" y="69" font-family="Liberation Mono">v</text><text x="204.06" y="69" font-family="Liberation Mono">(</text><text x="211.56" y="69" font-family="Liberation Mono">o</text><text x="219.06" y="69" font-family="Liberation Mono">u</text><text x="226.56" y="69" font-family="Liberation Mono">t</text><text x="234.06" y="69" font-family="Liberation Mono">)</text><text x="1219.06" y="69" font-family="Liberation Mono">v</text><text x="1226.56" y="69" font-family="Liberation Mono">(</text><text x="1234.06" y="69" font-family="Liberation Mono">i</text><text x="1241.56" y="69" font-family="Liberation Mono">n</text><text x="1249.06" y="69" font-family="Liberation Mono">)</text><text x="1256.56" y="69" font-family="Liberation Sans">–</text><text x="1264.06" y="69" font-family="Liberation Mono">v</text><text x="1271.56" y="69" font-family="Liberation Mono">(</text><text x="1279.06" y="69" font-family="Liberation Mono">b</text><text x="1286.56" y="69" font-family="Liberation Mono">)</text><text x="45.56" y="106" font-family="Liberation Sans">2</text><text x="53.06" y="106" font-family="Liberation Sans">0</text><text x="68.06" y="106" font-family="Liberation Sans">0</text><text x="45.56" y="215" font-family="Liberation Sans">1</text><text x="53.06" y="215" font-family="Liberation Sans">5</text><text x="68.06" y="215" font-family="Liberation Sans">0</text><text x="45.56" y="324" font-family="Liberation Sans">1</text><text x="53.06" y="324" font-family="Liberation Sans">0</text><text x="68.06" y="324" font-family="Liberation Sans">0</text><text x="54.31" y="433" font-family="Liberation Sans">5</text><text x="69.31" y="433" font-family="Liberation Sans">0</text><text x="54.31" y="542" font-family="Liberation Sans">0</text><text x="69.31" y="542" font-family="Liberation Sans">0</text><text x="45.56" y="651" font-family="Liberation Sans">–</text><text x="53.06" y="651" font-family="Liberation Sans">5</text><text x="68.06" y="651" font-family="Liberation Sans">0</text><text x="36.81" y="760" font-family="Liberation Sans">–</text><text x="44.31" y="760" font-family="Liberation Sans">1</text><text x="51.81" y="760" font-family="Liberation Sans">0</text><text x="66.81" y="760" font-family="Liberation Sans">0</text><text x="36.81" y="869" font-family="Liberation Sans">–</text><text x="44.31" y="869" font-family="Liberation Sans">1</text><text x="51.81" y="869" font-family="Liberation Sans">5</text><text x="66.81" y="869" font-family="Liberation Sans">0</text><text x="36.81" y="978" font-family="Liberation Sans">–</text><text x="44.31" y="978" font-family="Liberation Sans">2</text><text x="51.81" y="978" font-family="Liberation Sans">0</text><text x="66.81" y="978" font-family="Liberation Sans">0</text><text x="67.56" y="992" font-family="Liberation Sans">0</text><text x="82.56" y="992" font-family="Liberation Sans">0</text><text x="175.06" y="992" font-family="Liberation Sans">5</text><text x="190.06" y="992" font-family="Liberation Sans">0</text><text x="278.19" y="992" font-family="Liberation Sans">1</text><text x="285.69" y="992" font-family="Liberation Sans">0</text><text x="300.69" y="992" font-family="Liberation Sans">0</text><text x="385.69" y="992" font-family="Liberation Sans">1</text><text x="393.19" y="992" font-family="Liberation Sans">5</text><text x="408.19" y="992" font-family="Liberation Sans">0</text><text x="493.19" y="992" font-family="Liberation Sans">2</text><text x="500.69" y="992" font-family="Liberation Sans">0</text><text x="515.69" y="992" font-family="Liberation Sans">0</text><text x="600.69" y="992" font-family="Liberation Sans">2</text><text x="608.19" y="992" font-family="Liberation Sans">5</text><text x="623.19" y="992" font-family="Liberation Sans">0</text><text x="708.19" y="992" font-family="Liberation Sans">3</text><text x="715.69" y="992" font-family="Liberation Sans">0</text><text x="730.69" y="992" font-family="Liberation Sans">0</text><text x="815.69" y="992" font-family="Liberation Sans">3</text><text x="823.19" y="992" font-family="Liberation Sans">5</text><text x="838.19" y="992" font-family="Liberation Sans">0</text><text x="923.19" y="992" font-family="Liberation Sans">4</text><text x="930.69" y="992" font-family="Liberation Sans">0</text><text x="945.69" y="992" font-family="Liberation Sans">0</text><text x="1030.69" y="992" font-family="Liberation Sans">4</text><text x="1038.19" y="992" font-family="Liberation Sans">5</text><text x="1053.19" y="992" font-family="Liberation Sans">0</text><text x="1138.19" y="992" font-family="Liberation Sans">5</text><text x="1145.69" y="992" font-family="Liberation Sans">0</text><text x="1160.69" y="992" font-family="Liberation Sans">0</text><text x="1245.69" y="992" font-family="Liberation Sans">5</text><text x="1253.19" y="992" font-family="Liberation Sans">5</text><text x="1268.19" y="992" font-family="Liberation Sans">0</text><text x="1353.19" y="992" font-family="Liberation Sans">6</text><text x="1360.69" y="992" font-family="Liberation Sans">0</text><text x="1375.69" y="992" font-family="Liberation Sans">0</text><text x="1460.69" y="992" font-family="Liberation Sans">6</text><text x="1468.19" y="992" font-family="Liberation Sans">5</text><text x="1483.19" y="992" font-family="Liberation Sans">0</text><text x="1568.19" y="992" font-family="Liberation Sans">7</text><text x="1575.69" y="992" font-family="Liberation Sans">0</text><text x="1590.69" y="992" font-family="Liberation Sans">0</text><text x="1675.69" y="992" font-family="Liberation Sans">7</text><text x="1683.19" y="992" font-family="Liberation Sans">5</text><text x="1698.19" y="992" font-family="Liberation Sans">0</text><text x="1783.19" y="992" font-family="Liberation Sans">8</text><text x="1790.69" y="992" font-family="Liberation Sans">0</text><text x="1805.69" y="992" font-family="Liberation Sans">0</text><text x="1890.69" y="992" font-family="Liberation Sans">8</text><text x="1898.19" y="992" font-family="Liberation Sans">5</text><text x="1913.19" y="992" font-family="Liberation Sans">0</text><text x="1998.19" y="992" font-family="Liberation Sans">9</text><text x="2005.69" y="992" font-family="Liberation Sans">0</text><text x="2020.69" y="992" font-family="Liberation Sans">0</text><text x="2105.69" y="992" font-family="Liberation Sans">9</text><text x="2113.19" y="992" font-family="Liberation Sans">5</text><text x="2128.19" y="992" font-family="Liberation Sans">0</text><text x="2208.81" y="992" font-family="Liberation Sans">1</text><text x="2216.31" y="992" font-family="Liberation Sans">0</text><text x="2223.81" y="992" font-family="Liberation Sans">0</text><text x="2238.81" y="992" font-family="Liberation Sans">0</text><text x="821.56" y="1013" font-family="Liberation Mono">t</text><text x="829.06" y="1013" font-family="Liberation Mono">i</text><text x="836.56" y="1013" font-family="Liberation Mono">m</text><text x="844.06" y="1013" font-family="Liberation Mono">e</text><text x="1389.06" y="1013" font-family="Liberation Mono">m</text><text x="1396.56" y="1013" font-family="Liberation Mono">s</text></g>
<g stroke="#fff" stroke-width="1" fill="none"><path d="M47.2,105.5 h3 M48.7,104 v3"/><path d="M47.2,214.5 h3 M48.7,213 v3"/><path d="M47.2,323.5 h3 M48.7,322 v3"/><path d="M48.2,432.5 h3 M49.7,431 v3"/><path d="M48.2,541.5 h3 M49.7,540 v3"/><path d="M47.2,650.5 h3 M48.7,649 v3"/><path d="M46.2,759.5 h3 M47.7,758 v3"/><path d="M46.2,868.5 h3 M47.7,867 v3"/><path d="M46.2,977.5 h3 M47.7,976 v3"/><path d="M58.8,991.5 h3 M60.3,990 v3"/><path d="M144.8,991.5 h3 M146.3,990 v3"/><path d="M233.3,991.5 h3 M234.8,990 v3"/><path d="M319.3,991.5 h3 M320.8,990 v3"/><path d="M405.3,991.5 h3 M406.8,990 v3"/><path d="M491.3,991.5 h3 M492.8,990 v3"/><path d="M577.3,991.5 h3 M578.8,990 v3"/><path d="M663.3,991.5 h3 M664.8,990 v3"/><path d="M749.3,991.5 h3 M750.8,990 v3"/><path d="M835.3,991.5 h3 M836.8,990 v3"/><path d="M921.3,991.5 h3 M922.8,990 v3"/><path d="M1007.3,991.5 h3 M1008.8,990 v3"/><path d="M1093.3,991.5 h3 M1094.8,990 v3"/><path d="M1179.3,991.5 h3 M1180.8,990 v3"/><path d="M1265.3,991.5 h3 M1266.8,990 v3"/><path d="M1351.3,991.5 h3 M1352.8,990 v3"/><path d="M1437.3,991.5 h3 M1438.8,990 v3"/><path d="M1523.3,991.5 h3 M1524.8,990 v3"/><path d="M1609.3,991.5 h3 M1610.8,990 v3"/><path d="M1695.3,991.5 h3 M1696.8,990 v3"/><path d="M1783.8,991.5 h3 M1785.3,990 v3"/></g>
</svg>
<div id="panel" class="abs"></div>
<div class="abs btn" style="left:1845px;top:38px;width:38px;height:19px;padding-left:4px">quit</div>
<div class="abs btn" style="left:1845px;top:61px;width:66px;height:19px;padding-left:4px">hardcopy</div>
<div class="abs" style="left:0;top:1039.5px;width:1920px;height:4.5px;background:linear-gradient(rgba(0,0,0,0),rgba(0,0,0,0.38))"></div>
<div class="abs" style="left:0;top:1043.6px;width:1920px;height:37px;background:#2d3135"></div>
<div class="abs" style="left:0;top:1044px;width:1920px;height:1px;background:#232629"></div>
<div class="abs" style="left:182px;top:1046px;width:204px;height:3px;background:#4a4e53"></div>
<div class="abs task" style="left:216px;top:1046px">rectifier_capacitor_filte...</div>
<div class="abs" style="left:388px;top:1046px;width:203px;height:32px;background:#45494e;border-radius:1px"></div>
<div class="abs task" style="left:421px;top:1046px">flipping device in gsche...</div>
<div class="abs" style="left:593px;top:1046px;width:203px;height:3px;background:#4a4e53"></div>
<div class="abs task" style="left:626px;top:1046px">rectifier_capacitor_filte...</div>
<div class="abs" style="left:798px;top:1046px;width:203px;height:3px;background:#4a4e53"></div>
<div class="abs task" style="left:831px;top:1046px">sunny-iisc : bash — Ko...</div>
<div class="abs" style="left:1003px;top:1046px;width:203px;height:32px;background:#45494e;border-radius:1px"></div>
<div class="abs task" style="left:1036px;top:1046px">E3: 231 Designing with...</div>
<div class="abs" style="left:1208px;top:1046px;width:203px;height:32px;background:#45494e;border-radius:1px"></div>
<div class="abs task" style="left:1241px;top:1046px">1N4001 - Axial-Lead Gl...</div>
<div class="abs" style="left:1413px;top:1046px;width:203px;height:3px;background:#3a9bd0"></div>
<div class="abs task" style="left:1446px;top:1046px">tran1: *</div>

<svg class="abs" style="left:0;top:1043px" width="1920" height="37" viewBox="0 1043 1920 37">
<defs>
 <radialGradient id="ffg" cx="0.62" cy="0.3" r="0.8">
  <stop offset="0" stop-color="#fff44f"/><stop offset="0.35" stop-color="#ffbd2e"/><stop offset="0.6" stop-color="#ff7139"/><stop offset="0.85" stop-color="#ff3a4a"/><stop offset="1" stop-color="#e31587"/>
 </radialGradient>
 <linearGradient id="ffl" x1="0.85" y1="0.1" x2="0.15" y2="0.9"><stop offset="0" stop-color="#fff44f"/><stop offset="0.3" stop-color="#ffb52a"/><stop offset="0.55" stop-color="#ff6a1f"/><stop offset="0.8" stop-color="#ff2d55"/><stop offset="1" stop-color="#e0198a"/></linearGradient>
 <linearGradient id="ffglobe" x1="0" y1="0" x2="0" y2="1"><stop offset="0" stop-color="#0a8cff"/><stop offset="0.6" stop-color="#2a5ef0"/><stop offset="1" stop-color="#4b1fc0"/></linearGradient>
 <linearGradient id="ffyel" x1="0" y1="0" x2="0" y2="1"><stop offset="0" stop-color="#f4ff4a"/><stop offset="0.5" stop-color="#ffd02a"/><stop offset="1" stop-color="#ff9a1a"/></linearGradient>
 <linearGradient id="fold" x1="0" y1="0" x2="0" y2="1"><stop offset="0" stop-color="#46a3ec"/><stop offset="1" stop-color="#1f8ae0"/></linearGradient>
 <linearGradient id="termg" x1="0" y1="0" x2="0" y2="1"><stop offset="0" stop-color="#4a4f51"/><stop offset="1" stop-color="#363a3c"/></linearGradient>
</defs>
<!-- fedora -->
<circle cx="19" cy="1061.5" r="15" fill="#28457e"/>
<circle cx="22.5" cy="1055.5" r="5.2" fill="none" stroke="#4f7bc4" stroke-width="2.2"/>
<circle cx="14" cy="1068" r="5.2" fill="none" stroke="#4f7bc4" stroke-width="2.2"/>
<path d="M25.3,1051.8 A4.4,4.4 0 0 0 17.4,1055 L17.4,1068.3 A4.4,4.4 0 0 1 9.8,1072.8" fill="none" stroke="#fff" stroke-width="2.7" stroke-linecap="round"/><path d="M11.3,1062.2 L23.6,1062.2" stroke="#fff" stroke-width="2.7"/>
<!-- firefox -->
<g id="ff">
<circle cx="54.3" cy="1062" r="14.8" fill="url(#ffl)"/>
<path d="M39,1044 L59,1044 L58.5,1045.8 C57,1047.2 55,1048.2 52.5,1048.6 C50,1049 48,1050.5 47,1052.5 C45,1051 43,1049.8 41.2,1048.3 L39.3,1056 Z" fill="#2d3135"/>
<path d="M41.2,1048.3 C42.5,1050.5 44,1052 46.5,1052.5 C44,1054 42,1056 41,1058 C40.5,1054 40.6,1051 41.2,1048.3 Z" fill="#ff4a3a"/>
<circle cx="55.3" cy="1058.3" r="9.4" fill="url(#ffglobe)"/>
<path d="M58.5,1045.6 C66,1049 70,1056 69.2,1063 C68,1068 64,1072 59,1073 C64,1068 65,1061 62,1055 C60.5,1052 59,1049 58.5,1045.6 Z" fill="url(#ffyel)"/>
<path d="M46,1055.5 C48.5,1054.5 50.5,1055 51.5,1056.5 L49,1058 C47.5,1060 47.8,1062.5 49,1063.8 C51.5,1063.5 55,1064 56.5,1065.5 C53,1068 48,1068 45.5,1065 C43.5,1062 44,1058 46,1055.5 Z" fill="#ff8a1a"/>
<path d="M48.5,1064 C51,1063.5 54.5,1064 56.7,1065.3 C55,1066.8 51,1067.3 48.5,1066 Z" fill="#ffb21f"/>
</g>
<!-- terminal -->
<rect x="76" y="1048" width="28" height="27" fill="url(#termg)"/>
<rect x="76" y="1048" width="28" height="1" fill="#6e7374"/>
<path d="M87.2,1055.6 L93.6,1062.2 L87.2,1068.6" fill="none" stroke="#9ea3a4" stroke-width="1.4"/>
<!-- folder -->
<path d="M111,1048 L122,1048 L124,1050 L141,1050 L141,1054 L111,1054 Z" fill="#1b6aa7"/>
<rect x="112" y="1053" width="28" height="4.5" fill="#f4f8fb"/>
<path d="M111,1057.5 L126,1057.5 L127,1056.5 L141,1056.5 L141,1076 L111,1076 Z" fill="url(#fold)"/>
<!-- chrome -->
<circle cx="162" cy="1062" r="15" fill="#db4437"/>
<path d="M162,1062 L149,1054.5 A15,15 0 0 0 154.5,1075 Z" fill="#0f9d58"/>
<path d="M162,1062 L175,1054.5 A15,15 0 0 1 154.5,1075 Z" fill="#ffcd40"/>
<path d="M162,1062 L175,1054.5 L162,1055 Z" fill="#ffcd40"/>
<circle cx="162" cy="1062" r="6.8" fill="#fff"/>
<circle cx="162" cy="1062" r="5.3" fill="#4285f4"/>
<!-- task folder small -->
<path d="M189,1053 L197,1053 L198.5,1054.5 L209,1054.5 L209,1057 L189,1057 Z" fill="#1b6aa7"/>
<rect x="189.5" y="1056" width="19" height="3" fill="#f4f8fb"/>
<path d="M189,1059 L209,1059 L209,1071.5 L189,1071.5 Z" fill="url(#fold)"/>
<!-- task firefox small -->
<g transform="translate(404.3,1062.3) scale(0.68) translate(-54.3,-1062)"><use href="#ff"/></g>
<!-- editor -->
<rect x="600.5" y="1054" width="16" height="17" fill="#f2f2ee" stroke="#9a9a90" stroke-width="0.8"/>
<path d="M603,1058 h4 M603,1061 h3 M603,1064 h5 M603,1067 h4" stroke="#6a8a6a" stroke-width="1"/>
<path d="M607,1067 L616,1056 L618,1058 L609,1069 Z" fill="#f08a24"/>
<!-- terminal small -->
<rect x="805" y="1053" width="18" height="17" fill="url(#termg)"/>
<rect x="805" y="1053" width="18" height="1" fill="#8e9394"/>
<path d="M812,1058 L816,1061.5 L812,1065" fill="none" stroke="#9a9fa0" stroke-width="1.2"/>
<!-- mend icons -->
<g id="mend1">
<rect x="1010" y="1054" width="9" height="17" fill="#1d1d22"/>
<rect x="1011" y="1052" width="3" height="9" fill="#e8203a"/>
<path d="M1026.5,1054 Q1019,1061 1024,1070" fill="none" stroke="#3d8ef0" stroke-width="2.2"/>
</g>
<g transform="translate(205,0)">
<rect x="1010" y="1054" width="9" height="17" fill="#1d1d22"/>
<rect x="1011" y="1052" width="3" height="9" fill="#e8203a"/>
<path d="M1026.5,1054 Q1019,1061 1024,1070" fill="none" stroke="#3d8ef0" stroke-width="2.2"/>
</g>
<!-- X icon -->
<rect x="1420" y="1053" width="18" height="18" fill="#dedede"/>
<path d="M1424,1056.3 L1433.6,1068" stroke="#2a2426" stroke-width="1.9"/>
<path d="M1434.4,1056 L1425,1068" stroke="#555" stroke-width="0.9"/>
<path d="M1423.3,1060 Q1421.3,1063.5 1423.8,1067" fill="none" stroke="#e07060" stroke-width="1.2"/>
<!-- battery -->
<rect x="1626" y="1056.5" width="19" height="10.5" fill="none" stroke="#dfe1e2" stroke-width="1.2"/>
<rect x="1645" y="1059" width="1.6" height="5" fill="#dfe1e2"/>
<rect x="1628" y="1058.5" width="15" height="6.5" fill="#eeeeee"/>
<path d="M1634,1061.8 L1638,1058.8 L1638,1060.6 L1642,1060.6 L1642,1063 L1638,1063 L1638,1064.8 Z" fill="#27ae60"/>
<!-- wifi -->
<path d="M1652,1058 Q1661.5,1050 1671,1058" fill="none" stroke="#d8dadb" stroke-width="1.4"/>
<path d="M1655,1061 Q1661.5,1055 1668,1061" fill="none" stroke="#d8dadb" stroke-width="1.4"/>
<path d="M1658,1064 Q1661.5,1061 1665,1064" fill="none" stroke="#d8dadb" stroke-width="1.4"/>
<circle cx="1661.5" cy="1068" r="1.6" fill="none" stroke="#d8dadb" stroke-width="1.2"/>
<!-- clipboard -->
<rect x="1681.5" y="1056" width="13" height="14" fill="none" stroke="#e8eaeb" stroke-width="1.5"/>
<rect x="1684" y="1054" width="8" height="3.5" fill="#e8eaeb"/>
<path d="M1684,1061 h7 M1684,1064 h5 M1684,1067 h3" stroke="#e8eaeb" stroke-width="1.2"/>
<!-- speaker -->
<path d="M1705.5,1059 L1709,1059 L1714,1054.5 L1714,1069.5 L1709,1065 L1705.5,1065 Z" fill="#eceeef"/>
<path d="M1716.5,1057.5 Q1719.5,1062 1716.5,1066.5" fill="none" stroke="#c8cacb" stroke-width="1.2"/>
<path d="M1718.5,1055 Q1723,1062 1718.5,1069" fill="none" stroke="#8a8d8f" stroke-width="1.2"/>
<!-- up triangle -->
<path d="M1734,1065 L1740,1058.5 L1746,1065 Z" fill="#eceeef"/>
</svg>

<div class="abs" style="left:1629px;top:1066px;font-size:9px;line-height:9px;color:#dfe1e2">92%</div>
<div class="abs" style="left:1796px;top:1045px;font-size:18px;line-height:20px;color:#eff0f1;transform-origin:0 0;transform:scaleX(1.14)">13:52:12</div>
<div class="abs" style="left:1755px;top:1063px;font-size:14px;line-height:16px;color:#eff0f1;white-space:nowrap;transform-origin:0 0;transform:scaleX(1.12)">Sunday 10 March 2019</div>
<svg class="abs" style="left:0;top:0" width="1920" height="29">
<rect x="6" y="6" width="16" height="16" fill="#dcdfe0"/>
<path d="M9.6,8.8 L17.8,19.2" stroke="#26332c" stroke-width="1.7"/>
<path d="M18.6,8.3 L12.6,17.2" stroke="#7a7e7c" stroke-width="0.9"/>
<path d="M9.8,12.5 Q7.5,15.5 9.6,19.2" fill="none" stroke="#d8a0a0" stroke-width="1.2"/>
<path d="M10.5,17 Q13,15.5 15.5,18" fill="none" stroke="#e0c8b0" stroke-width="1.2"/>
<path d="M1852.3,11.3 L1858,17 L1863.7,11.3" fill="none" stroke="#eff0f1" stroke-width="1.1"/>
<path d="M1882,9 L1887,14 L1882,19 L1877,14 Z" fill="none" stroke="#eff0f1" stroke-width="1.1"/>
<circle cx="1906" cy="14" r="9" fill="#fcfcfc"/>
<path d="M1902,10 L1910,18 M1910,10 L1902,18" stroke="#3a3f44" stroke-width="1"/>
</svg>
<svg class="abs" style="left:1870px;top:410px" width="40" height="40">
<path d="M10.1,10.8 L21.2,22.3 L18.3,25 L18.2,30.3 L14.1,27.4 L10.1,27.4 Z" fill="#fcfcfc" stroke="#fcfcfc" stroke-width="1.6" stroke-linejoin="round"/><path d="M10.1,11.3 L20.6,22.3 L17.6,25.1 L17.6,29.6 L14.2,26.9 L10.1,26.9 Z" fill="#3b3c40"/>
</svg>
</body></html>
